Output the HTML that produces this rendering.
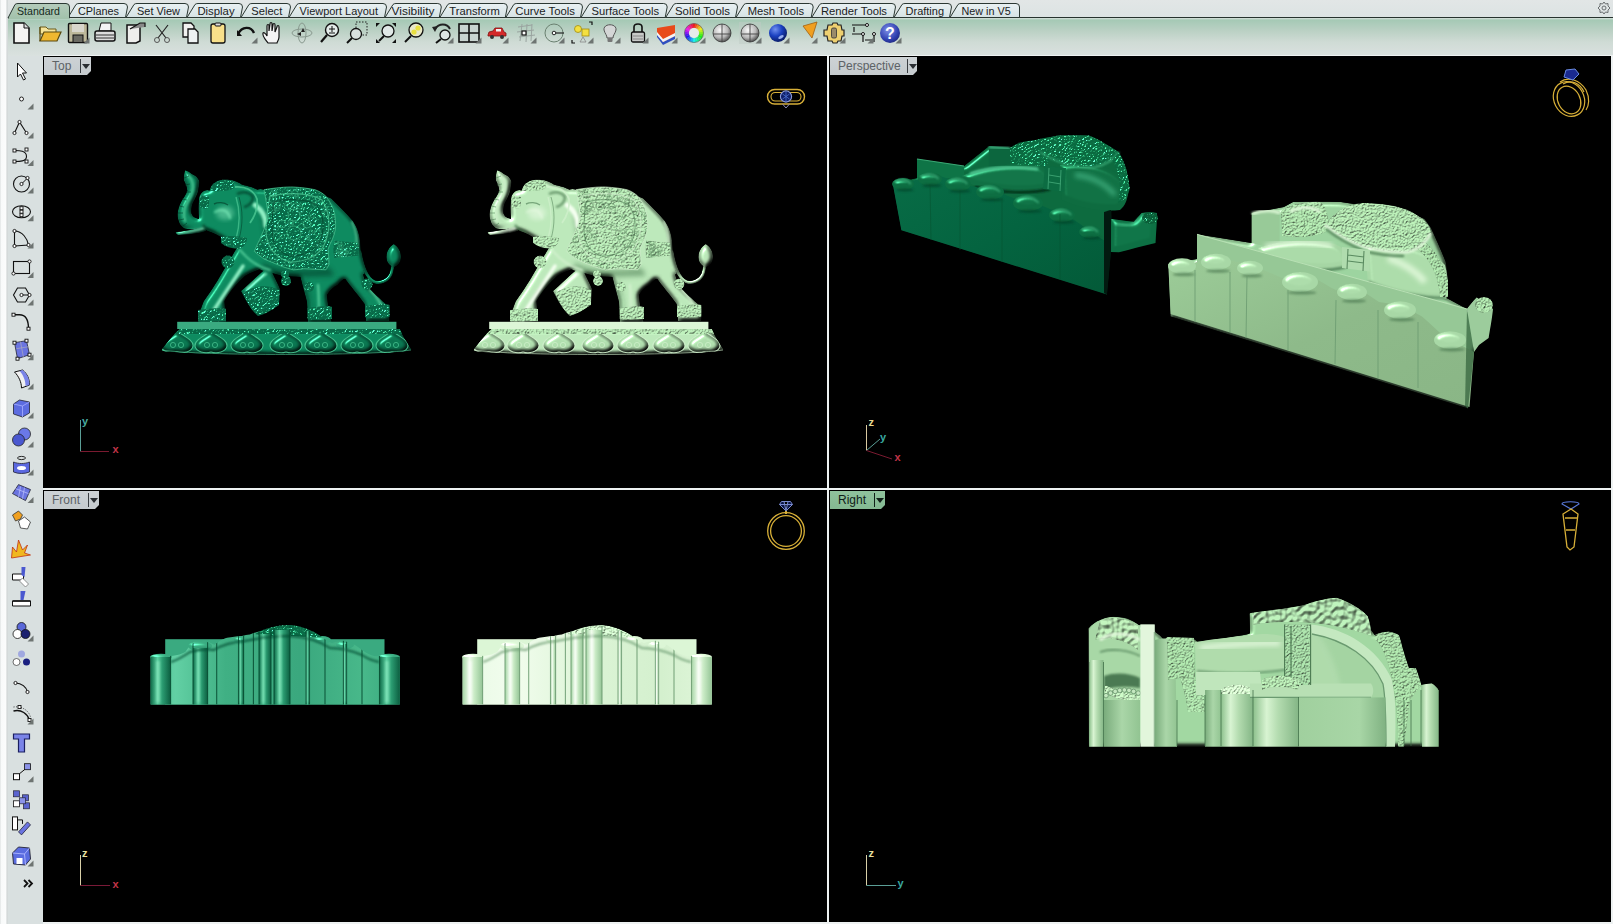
<!DOCTYPE html>
<html><head><meta charset="utf-8">
<style>
html,body{margin:0;padding:0;width:1613px;height:924px;overflow:hidden;background:#dfe4e4;font-family:"Liberation Sans",sans-serif;}
.abs{position:absolute;}
#tabrow{left:0;top:0;width:1613px;height:18px;background:linear-gradient(#e2e6e6,#dce3e3);}
#tbar{left:8px;top:18px;width:1605px;height:38px;background:linear-gradient(#d9e2de 0px,#a5c9b5 2px,#b9d0c3 12px,#cfdbd5 24px,#dae1df 38px);}
#lstrip{left:0;top:0;width:8px;height:924px;background:linear-gradient(90deg,#d8dcdc 0,#f8fafa 1px,#fbfcfc 6px,#c9cfcf 7px,#dfe4e4 8px);}
#ltb{left:8px;top:56px;width:35px;height:868px;background:#d9e0e0;}
.vp{position:absolute;background:#000;overflow:hidden;}
.lbl{position:absolute;height:18px;background:linear-gradient(#cdd2d5,#c5cbce);color:#5d6266;font-size:12px;line-height:18px;clip-path:polygon(0 0,100% 0,100% calc(100% - 4px),calc(100% - 4px) 100%,0 100%);}
.lbl span{position:absolute;left:8px;top:0;}
.lbl i{position:absolute;top:2px;width:1px;height:14px;background:#3a3e42;}
.lbl b{position:absolute;top:7px;width:0;height:0;border-left:4px solid transparent;border-right:4px solid transparent;border-top:5px solid #2a2e32;}
</style></head>
<body>
<div id="tabrow" class="abs"></div>
<div id="tbar" class="abs"></div>
<div id="lstrip" class="abs"></div>
<div id="ltb" class="abs"></div>
<svg class="abs" style="left:0;top:0" width="1613" height="20">
<defs><linearGradient id="tgi" x1="0" y1="0" x2="0" y2="1"><stop offset="0" stop-color="#e9f1f3"/><stop offset="1" stop-color="#d6e2e4"/></linearGradient><linearGradient id="tga" x1="0" y1="0" x2="0" y2="1"><stop offset="0" stop-color="#b4cbbb"/><stop offset="1" stop-color="#a3c2ac"/></linearGradient></defs>
<rect x="8" y="17" width="1605" height="1" fill="#27332e"/>
<path d="M68,17.5 L76,4.5 Q77,3.5 79,3.5 L124,3.5 Q127.5,3.5 127.5,7 L125.5,17.5 Z" fill="url(#tgi)" stroke="#2b3833" stroke-width="1"/>
<text x="78" y="14.5" font-family="Liberation Sans" font-size="11.5" fill="#1a221e" textLength="41" lengthAdjust="spacingAndGlyphs">CPlanes</text>
<path d="M126,17.5 L134,4.5 Q135,3.5 137,3.5 L185,3.5 Q188.5,3.5 188.5,7 L186.5,17.5 Z" fill="url(#tgi)" stroke="#2b3833" stroke-width="1"/>
<text x="137" y="14.5" font-family="Liberation Sans" font-size="11.5" fill="#1a221e" textLength="43" lengthAdjust="spacingAndGlyphs">Set View</text>
<path d="M187,17.5 L195,4.5 Q196,3.5 198,3.5 L239,3.5 Q242.5,3.5 242.5,7 L240.5,17.5 Z" fill="url(#tgi)" stroke="#2b3833" stroke-width="1"/>
<text x="197.4" y="14.5" font-family="Liberation Sans" font-size="11.5" fill="#1a221e" textLength="37.2" lengthAdjust="spacingAndGlyphs">Display</text>
<path d="M241,17.5 L249,4.5 Q250,3.5 252,3.5 L287,3.5 Q290.5,3.5 290.5,7 L288.5,17.5 Z" fill="url(#tgi)" stroke="#2b3833" stroke-width="1"/>
<text x="251.3" y="14.5" font-family="Liberation Sans" font-size="11.5" fill="#1a221e" textLength="31" lengthAdjust="spacingAndGlyphs">Select</text>
<path d="M289,17.5 L297,4.5 Q298,3.5 300,3.5 L383,3.5 Q386.5,3.5 386.5,7 L384.5,17.5 Z" fill="url(#tgi)" stroke="#2b3833" stroke-width="1"/>
<text x="299.6" y="14.5" font-family="Liberation Sans" font-size="11.5" fill="#1a221e" textLength="78.4" lengthAdjust="spacingAndGlyphs">Viewport Layout</text>
<path d="M385,17.5 L393,4.5 Q394,3.5 396,3.5 L437.8,3.5 Q441.3,3.5 441.3,7 L439.3,17.5 Z" fill="url(#tgi)" stroke="#2b3833" stroke-width="1"/>
<text x="391.6" y="14.5" font-family="Liberation Sans" font-size="11.5" fill="#1a221e" textLength="42.8" lengthAdjust="spacingAndGlyphs">Visibility</text>
<path d="M439.8,17.5 L447.8,4.5 Q448.8,3.5 450.8,3.5 L503.8,3.5 Q507.3,3.5 507.3,7 L505.3,17.5 Z" fill="url(#tgi)" stroke="#2b3833" stroke-width="1"/>
<text x="449.3" y="14.5" font-family="Liberation Sans" font-size="11.5" fill="#1a221e" textLength="50.6" lengthAdjust="spacingAndGlyphs">Transform</text>
<path d="M505.8,17.5 L513.8,4.5 Q514.8,3.5 516.8,3.5 L579,3.5 Q582.5,3.5 582.5,7 L580.5,17.5 Z" fill="url(#tgi)" stroke="#2b3833" stroke-width="1"/>
<text x="515.3" y="14.5" font-family="Liberation Sans" font-size="11.5" fill="#1a221e" textLength="59.7" lengthAdjust="spacingAndGlyphs">Curve Tools</text>
<path d="M581,17.5 L589,4.5 Q590,3.5 592,3.5 L663.7,3.5 Q667.2,3.5 667.2,7 L665.2,17.5 Z" fill="url(#tgi)" stroke="#2b3833" stroke-width="1"/>
<text x="591.5" y="14.5" font-family="Liberation Sans" font-size="11.5" fill="#1a221e" textLength="67.5" lengthAdjust="spacingAndGlyphs">Surface Tools</text>
<path d="M665.7,17.5 L673.7,4.5 Q674.7,3.5 676.7,3.5 L734,3.5 Q737.5,3.5 737.5,7 L735.5,17.5 Z" fill="url(#tgi)" stroke="#2b3833" stroke-width="1"/>
<text x="675" y="14.5" font-family="Liberation Sans" font-size="11.5" fill="#1a221e" textLength="55" lengthAdjust="spacingAndGlyphs">Solid Tools</text>
<path d="M736,17.5 L744,4.5 Q745,3.5 747,3.5 L809.7,3.5 Q813.2,3.5 813.2,7 L811.2,17.5 Z" fill="url(#tgi)" stroke="#2b3833" stroke-width="1"/>
<text x="747.7" y="14.5" font-family="Liberation Sans" font-size="11.5" fill="#1a221e" textLength="56.3" lengthAdjust="spacingAndGlyphs">Mesh Tools</text>
<path d="M811.7,17.5 L819.7,4.5 Q820.7,3.5 822.7,3.5 L892,3.5 Q895.5,3.5 895.5,7 L893.5,17.5 Z" fill="url(#tgi)" stroke="#2b3833" stroke-width="1"/>
<text x="821" y="14.5" font-family="Liberation Sans" font-size="11.5" fill="#1a221e" textLength="66" lengthAdjust="spacingAndGlyphs">Render Tools</text>
<path d="M894,17.5 L902,4.5 Q903,3.5 905,3.5 L948,3.5 Q951.5,3.5 951.5,7 L949.5,17.5 Z" fill="url(#tgi)" stroke="#2b3833" stroke-width="1"/>
<text x="905.6" y="14.5" font-family="Liberation Sans" font-size="11.5" fill="#1a221e" textLength="38.4" lengthAdjust="spacingAndGlyphs">Drafting</text>
<path d="M950,17.5 L958,4.5 Q959,3.5 961,3.5 L1016,3.5 Q1019.5,3.5 1019.5,7 L1019.5,17.5 Z" fill="url(#tgi)" stroke="#2b3833" stroke-width="1"/>
<text x="961.5" y="14.5" font-family="Liberation Sans" font-size="11.5" fill="#1a221e" textLength="49.2" lengthAdjust="spacingAndGlyphs">New in V5</text>
<path d="M8,18 L15,4.5 Q16,3.5 18,3.5 L66,3.5 Q69.5,3.5 69.5,7 L69.5,18 Z" fill="url(#tga)" stroke="#2b3833" stroke-width="1"/>
<rect x="9" y="17" width="60" height="2" fill="#a3c2ac"/>
<text x="17" y="14.5" font-family="Liberation Sans" font-size="11.5" fill="#142a1c" textLength="43" lengthAdjust="spacingAndGlyphs">Standard</text>
<g transform="translate(1604,8)" fill="none" stroke="#6a6e70" stroke-width="1"><circle r="2"/><path d="M0,-6 L1.5,-4 L4,-4.5 L4,-2 L6,0 L4,2 L4,4.5 L1.5,4 L0,6 L-1.5,4 L-4,4.5 L-4,2 L-6,0 L-4,-2 L-4,-4.5 L-1.5,-4 Z"/></g>
</svg>
<svg class="abs" style="left:0;top:0" width="1000" height="56">
<defs><radialGradient id="sph" cx="0.4" cy="0.35" r="0.7"><stop offset="0" stop-color="#fafafa"/><stop offset="0.6" stop-color="#b8b8b8"/><stop offset="1" stop-color="#404040"/></radialGradient><radialGradient id="bsph" cx="0.35" cy="0.3" r="0.75"><stop offset="0" stop-color="#7090f0"/><stop offset="0.5" stop-color="#1a40c0"/><stop offset="1" stop-color="#0a1a60"/></radialGradient><radialGradient id="hsph" cx="0.4" cy="0.35" r="0.7"><stop offset="0" stop-color="#8090e8"/><stop offset="0.7" stop-color="#3040b0"/><stop offset="1" stop-color="#202880"/></radialGradient><linearGradient id="cw"><stop offset="0" stop-color="#e04040"/><stop offset="1" stop-color="#4040e0"/></linearGradient></defs>
<g transform="translate(21,33)"><path d="M-7,-10 L3,-10 L8,-5 L8,10 L-7,10 Z" fill="#f4f4f2" stroke="#111" stroke-width="1.6"/><path d="M3,-10 L3,-5 L8,-5" fill="#ddd" stroke="#111" stroke-width="1"/></g>
<g transform="translate(50,33)"><path d="M-10,-6 L-4,-6 L-2,-4 L6,-4 L6,1 L-10,1Z" fill="#f6e49a" stroke="#6b5a1a" stroke-width="1"/><path d="M-10,8 L-6,-1 L11,-1 L7,8 Z" fill="#f0b830" stroke="#5a4a10" stroke-width="1.2"/><path d="M-10,-6 L-10,8" stroke="#5a4a10" stroke-width="1.2"/></g>
<g transform="translate(78,33)"><rect x="-9.5" y="-9.5" width="19" height="19" rx="1" fill="#bdb89a" stroke="#111" stroke-width="1.4"/><rect x="-6" y="-9" width="12" height="8" fill="#d8d6cc"/><rect x="-5" y="2" width="10" height="7.5" fill="#6a6a62" stroke="#111" stroke-width="1"/></g>
<path d="M89.5,37.5 L89.5,43.5 L83.5,43.5 Z" fill="#6e7472"/>
<g transform="translate(105,33)"><path d="M-4,-10 L6,-10 L6,-2 L-6,-2 Z" fill="#f4f4f4" stroke="#111" stroke-width="1"/><rect x="-10" y="-2" width="20" height="10" rx="2" fill="#dcdcdc" stroke="#111" stroke-width="1.5"/><path d="M-9,2 L9,2 M-9,5 L9,5" stroke="#333" stroke-width="1.2"/></g>
<g transform="translate(136,33)"><path d="M-9,-8 L4,-8 L4,8 L0,10 L-9,10 Z" fill="#eeeeec" stroke="#111" stroke-width="1.5"/><path d="M-6,-4 L4,-10 L9,-10 L9,-6" fill="#888" stroke="#111" stroke-width="1.2"/></g>
<g transform="translate(162,33)"><path d="M-6,-8 L4,5 M6,-8 L-4,5" stroke="#222" stroke-width="1.2"/><circle cx="-5" cy="7" r="2.5" fill="none" stroke="#555" stroke-width="1"/><circle cx="5" cy="7" r="2.5" fill="none" stroke="#555" stroke-width="1"/></g>
<g transform="translate(190,33)"><path d="M-7,-10 L1,-10 L4,-7 L4,4 L-7,4 Z" fill="#f2f2f0" stroke="#111" stroke-width="1.3"/><path d="M-2,-4 L5,-4 L8,-1 L8,10 L-2,10 Z" fill="#eef2f2" stroke="#111" stroke-width="1.3"/></g>
<g transform="translate(218,33)"><rect x="-7" y="-9" width="14" height="19" rx="2" fill="#f8e08a" stroke="#111" stroke-width="1.3"/><rect x="-3" y="-10" width="6" height="3" rx="1" fill="#ddd" stroke="#111" stroke-width="1"/></g>
<g transform="translate(246,32)"><path d="M-8,2 C-4,-6 5,-6 8,1" fill="none" stroke="#111" stroke-width="2.4"/><path d="M-10,-1 L-5,5 L-10,5 Z" fill="#111" transform="translate(1,-1)"/></g>
<path d="M257.5,37.5 L257.5,43.5 L251.5,43.5 Z" fill="#6e7472"/>
<g transform="translate(272,33)"><path d="M-4,10 C-7,6 -10,3 -9,0 C-8,-1 -6,1 -5,3 L-5,-7 C-5,-9 -3,-9 -3,-7 L-3,-2 L-2,-9 C-2,-11 0,-11 0,-9 L0,-2 L1,-8 C1,-10 3,-10 3,-8 L3,-1 L5,-6 C5,-8 7,-8 7,-6 L7,4 C7,7 5,9 5,10 Z" fill="#f4f4f4" stroke="#111" stroke-width="1.2"/></g>
<g transform="translate(302,33)"><ellipse rx="10" ry="4" fill="none" stroke="#8a9a90" stroke-width="1"/><ellipse rx="4" ry="10" fill="none" stroke="#8a9a90" stroke-width="1"/><path d="M1,-5 L3,-1 L-1,-1Z M-5,1 L-1,-1 L-1,3Z" fill="#222"/></g>
<g transform="translate(330,33)"><circle cx="2" cy="-3" r="6.5" fill="#e4ecea" stroke="#111" stroke-width="1.4"/><path d="M-3,2 L-9,9" stroke="#111" stroke-width="2.2"/><path d="M-1,-4 L5,-4 M2,-7 L2,-1 M-1,0 L5,0" stroke="#111" stroke-width="1"/></g>
<g transform="translate(357,33)"><rect x="-1" y="-11" width="11" height="13" fill="none" stroke="#222" stroke-width="1" stroke-dasharray="1.5,1.5"/><circle cx="-1" cy="1" r="5.5" fill="#d8e0de" stroke="#111" stroke-width="1.3"/><path d="M-5,5 L-10,10" stroke="#111" stroke-width="2"/></g>
<g transform="translate(386,33)"><path d="M-10,-10 L-6,-10 L-10,-6Z M10,-10 L6,-10 L10,-6Z M-10,10 L-6,10 L-10,6Z M10,10 L6,10 L10,6Z" fill="#111"/><circle cx="2" cy="-2" r="6" fill="#e0e8e6" stroke="#111" stroke-width="1.3"/><path d="M-2,3 L-7,8" stroke="#111" stroke-width="2"/></g>
<g transform="translate(414,33)"><circle cx="2" cy="-3" r="7" fill="#e8e8c8" stroke="#111" stroke-width="1.3"/><circle cx="4" cy="-5" r="2.6" fill="#e8e040"/><circle cx="0" cy="-1" r="2.6" fill="#e8e040"/><path d="M-3,3 L-9,9" stroke="#111" stroke-width="2"/></g>
<g transform="translate(442,33)"><path d="M-7,-4 C-3,-10 5,-10 8,-4" fill="none" stroke="#222" stroke-width="2"/><path d="M-10,-6 L-4,-7 L-7,-1Z" fill="#222"/><circle cx="3" cy="2" r="5" fill="#dde4e2" stroke="#111" stroke-width="1.3"/><path d="M-1,6 L-6,10" stroke="#111" stroke-width="2"/></g>
<path d="M453.5,37.5 L453.5,43.5 L447.5,43.5 Z" fill="#6e7472"/>
<g transform="translate(469,33)"><rect x="-10" y="-9" width="20" height="18" fill="#c8d4d0" stroke="#111" stroke-width="1.6"/><path d="M0,-9 L0,9 M-10,0 L10,0" stroke="#111" stroke-width="1.6"/></g>
<path d="M481.5,37.5 L481.5,43.5 L475.5,43.5 Z" fill="#6e7472"/>
<g transform="translate(497,33)"><path d="M-9,2 L-8,-1 L-4,-2 L-2,-5 L5,-5 L7,-1 L9,0 L9,3 L-9,3Z" fill="#d42a2a" stroke="#801010" stroke-width="0.8"/><rect x="-1" y="-4" width="5" height="2.5" fill="#f0f0f0"/><circle cx="-5" cy="4" r="2" fill="#333"/><circle cx="5" cy="4" r="2" fill="#333"/></g>
<path d="M508.5,37.5 L508.5,43.5 L502.5,43.5 Z" fill="#6e7472"/>
<g transform="translate(526,33)"><path d="M-8,-6 L6,-8 M-9,-1 L8,-3 M-7,4 L9,2 M-4,-9 L-6,8 M1,-9 L0,9 M6,-9 L5,8" stroke="#9aa4a0" stroke-width="1"/><rect x="-4" y="-2" width="4" height="4" fill="#fff" stroke="#111" stroke-width="1.2"/></g>
<path d="M536.5,37.5 L536.5,43.5 L530.5,43.5 Z" fill="#6e7472"/>
<g transform="translate(554,33)"><circle r="9" fill="none" stroke="#6a8070" stroke-width="1"/><circle r="1.8" fill="#fff" stroke="#222" stroke-width="1"/><path d="M2,0 L10,0" stroke="#222" stroke-width="1.2"/></g>
<path d="M564.5,37.5 L564.5,43.5 L558.5,43.5 Z" fill="#6e7472"/>
<g transform="translate(582,33)"><circle cx="-4" cy="-4" r="3.5" fill="#f4e040" stroke="#a08a10" stroke-width="0.8"/><rect x="0" y="-4" width="7" height="7" fill="#f4e040" stroke="#a08a10" stroke-width="0.8"/><path d="M-2,9 L1,4 L4,9Z" fill="none" stroke="#888" stroke-width="0.8"/><path d="M7,-11 L10,-11 L10,-8 M-10,7 L-10,10 L-7,10" stroke="#111" stroke-width="1.2" fill="none"/></g>
<path d="M593.5,37.5 L593.5,43.5 L587.5,43.5 Z" fill="#6e7472"/>
<g transform="translate(610,32)"><path d="M-6,-2 C-7,-9 7,-9 6,-2 C5,2 3,3 3,6 L-3,6 C-3,3 -5,2 -6,-2Z" fill="#d4d6d6" stroke="#555" stroke-width="1"/><rect x="-2.5" y="6" width="5" height="4" rx="1" fill="#777"/></g>
<path d="M620.5,37.5 L620.5,43.5 L614.5,43.5 Z" fill="#6e7472"/>
<g transform="translate(638,33)"><path d="M-4,-1 L-4,-6 C-4,-10 4,-10 4,-6 L4,-1" fill="none" stroke="#111" stroke-width="1.6"/><rect x="-6.5" y="-1" width="13" height="10" rx="1.5" fill="#c8cac8" stroke="#111" stroke-width="1.3"/><path d="M-5,3 L5,3 M-5,6 L5,6" stroke="#888" stroke-width="1"/></g>
<path d="M648.5,37.5 L648.5,43.5 L642.5,43.5 Z" fill="#6e7472"/>
<g transform="translate(666,33)"><path d="M-9,-5 L9,-8 L9,3 L-3,9 L-9,0Z" fill="#e84a1a"/><path d="M-9,0 L-3,9 L9,3 L9,6 L-3,12 L-9,4Z" fill="#3050c0"/><path d="M-9,-1 L-3,6 L9,0 L9,3 L-3,9 L-9,2Z" fill="#f4f4f4"/></g>
<path d="M677.5,37.5 L677.5,43.5 L671.5,43.5 Z" fill="#6e7472"/>
<g transform="translate(694,33)"><path d="M-1.32,-9.41 L1.32,-9.41 L0.70,-4.95 L-0.70,-4.95Z" fill="hsl(0,85%,52%)"/><path d="M1.16,-9.43 L3.71,-8.74 L1.95,-4.60 L0.61,-4.96Z" fill="hsl(15,85%,52%)"/><path d="M3.56,-8.81 L5.85,-7.49 L3.08,-3.94 L1.87,-4.64Z" fill="hsl(30,85%,52%)"/><path d="M5.72,-7.59 L7.59,-5.72 L3.99,-3.01 L3.01,-3.99Z" fill="hsl(45,85%,52%)"/><path d="M7.49,-5.85 L8.81,-3.56 L4.64,-1.87 L3.94,-3.08Z" fill="hsl(60,85%,52%)"/><path d="M8.74,-3.71 L9.43,-1.16 L4.96,-0.61 L4.60,-1.95Z" fill="hsl(75,85%,52%)"/><path d="M9.41,-1.32 L9.41,1.32 L4.95,0.70 L4.95,-0.70Z" fill="hsl(90,85%,52%)"/><path d="M9.43,1.16 L8.74,3.71 L4.60,1.95 L4.96,0.61Z" fill="hsl(105,85%,52%)"/><path d="M8.81,3.56 L7.49,5.85 L3.94,3.08 L4.64,1.87Z" fill="hsl(120,85%,52%)"/><path d="M7.59,5.72 L5.72,7.59 L3.01,3.99 L3.99,3.01Z" fill="hsl(135,85%,52%)"/><path d="M5.85,7.49 L3.56,8.81 L1.87,4.64 L3.08,3.94Z" fill="hsl(150,85%,52%)"/><path d="M3.71,8.74 L1.16,9.43 L0.61,4.96 L1.95,4.60Z" fill="hsl(165,85%,52%)"/><path d="M1.32,9.41 L-1.32,9.41 L-0.70,4.95 L0.70,4.95Z" fill="hsl(180,85%,52%)"/><path d="M-1.16,9.43 L-3.71,8.74 L-1.95,4.60 L-0.61,4.96Z" fill="hsl(195,85%,52%)"/><path d="M-3.56,8.81 L-5.85,7.49 L-3.08,3.94 L-1.87,4.64Z" fill="hsl(210,85%,52%)"/><path d="M-5.72,7.59 L-7.59,5.72 L-3.99,3.01 L-3.01,3.99Z" fill="hsl(225,85%,52%)"/><path d="M-7.49,5.85 L-8.81,3.56 L-4.64,1.87 L-3.94,3.08Z" fill="hsl(240,85%,52%)"/><path d="M-8.74,3.71 L-9.43,1.16 L-4.96,0.61 L-4.60,1.95Z" fill="hsl(255,85%,52%)"/><path d="M-9.41,1.32 L-9.41,-1.32 L-4.95,-0.70 L-4.95,0.70Z" fill="hsl(270,85%,52%)"/><path d="M-9.43,-1.16 L-8.74,-3.71 L-4.60,-1.95 L-4.96,-0.61Z" fill="hsl(285,85%,52%)"/><path d="M-8.81,-3.56 L-7.49,-5.85 L-3.94,-3.08 L-4.64,-1.87Z" fill="hsl(300,85%,52%)"/><path d="M-7.59,-5.72 L-5.72,-7.59 L-3.01,-3.99 L-3.99,-3.01Z" fill="hsl(315,85%,52%)"/><path d="M-5.85,-7.49 L-3.56,-8.81 L-1.87,-4.64 L-3.08,-3.94Z" fill="hsl(330,85%,52%)"/><path d="M-3.71,-8.74 L-1.16,-9.43 L-0.61,-4.96 L-1.95,-4.60Z" fill="hsl(345,85%,52%)"/><circle r="5" fill="#e8ecea"/><circle r="9.5" fill="none" stroke="#555" stroke-width="0.6"/></g>
<path d="M705.5,37.5 L705.5,43.5 L699.5,43.5 Z" fill="#6e7472"/>
<g transform="translate(722,33)"><circle r="9" fill="url(#sph)" stroke="#333" stroke-width="0.8"/><path d="M-9,1 L9,1 M0,-9 L0,9" stroke="#444" stroke-width="0.9"/></g>
<g transform="translate(750,33)"><rect x="-11" y="-11" width="22" height="22" fill="#c0ccc6" opacity="0.5"/><circle r="9" fill="url(#sph)" stroke="#333" stroke-width="0.8"/><path d="M-9,1 L9,1 M0,-9 L0,9" stroke="#444" stroke-width="0.9"/></g>
<path d="M761.5,37.5 L761.5,43.5 L755.5,43.5 Z" fill="#6e7472"/>
<g transform="translate(778,33)"><circle r="9" fill="url(#bsph)"/><ellipse cx="3" cy="4" rx="3" ry="1.5" fill="#9ab0f0" transform="rotate(-30 3 4)"/></g>
<path d="M789.5,37.5 L789.5,43.5 L783.5,43.5 Z" fill="#6e7472"/>
<g transform="translate(810,31)"><path d="M-7,-5 L7,-9 L2,7Z" fill="#f0a020" stroke="#a06010" stroke-width="0.8"/></g>
<path d="M817.5,37.5 L817.5,43.5 L811.5,43.5 Z" fill="#6e7472"/>
<g transform="translate(834,33)"><path d="M-10,-3 L-7,-3 L-6,-8 L-2,-8 L-1,-10 L3,-10 L4,-8 L7,-8 L8,-3 L10,-3 L10,3 L8,3 L7,8 L4,8 L3,10 L-1,10 L-2,8 L-6,8 L-7,3 L-10,3Z" fill="#eed070" stroke="#222" stroke-width="1.2"/><rect x="-2.5" y="-5" width="5" height="10" rx="1.5" fill="#9a8a6a" stroke="#333" stroke-width="0.8"/></g>
<path d="M845.5,37.5 L845.5,43.5 L839.5,43.5 Z" fill="#6e7472"/>
<g transform="translate(862,33)"><path d="M-10,-8 L4,-8 M-10,1 L1,1 L1,9 M12,1 L12,9 M-8,-6 L-8,-1 M3,7 L11,7" stroke="#111" stroke-width="1.2" fill="none"/><circle cx="5" cy="-8" r="1.5" fill="#fff" stroke="#111"/><circle cx="1" cy="1" r="1.5" fill="#fff" stroke="#111"/><circle cx="12" cy="1" r="1.5" fill="#fff" stroke="#111"/></g>
<path d="M873.5,37.5 L873.5,43.5 L867.5,43.5 Z" fill="#6e7472"/>
<g transform="translate(890,33)"><circle r="10" fill="url(#hsph)"/><text x="0" y="6" text-anchor="middle" font-family="Liberation Sans" font-weight="bold" font-size="16" fill="#fff">?</text></g>
<path d="M901.5,37.5 L901.5,43.5 L895.5,43.5 Z" fill="#6e7472"/>
</svg>
<svg class="abs" style="left:0;top:56px" width="43" height="868">
<g transform="translate(21.5,15)"><path d="M-4,-8 L-4,6 L-1,3 L2,9 L4,8 L1,2 L5,2 Z" fill="#fff" stroke="#111" stroke-width="1"/></g>
<g transform="translate(21.5,43)"><circle cx="0" cy="0" r="2" fill="#fff" stroke="#111" stroke-width="0.9"/></g>
<path d="M33.5,47.5 L33.5,53.5 L27.5,53.5 Z" fill="#6e7472"/>
<g transform="translate(21.5,72)"><path d="M-7,5 L-2,-6 L5,5" fill="none" stroke="#111" stroke-width="1.1"/><circle cx="-7" cy="5" r="1.6" fill="#fff" stroke="#111" stroke-width="0.9"/><circle cx="-2" cy="-6" r="1.6" fill="#fff" stroke="#111" stroke-width="0.9"/><circle cx="5" cy="5" r="1.6" fill="#fff" stroke="#111" stroke-width="0.9"/></g>
<path d="M33.5,76.5 L33.5,82.5 L27.5,82.5 Z" fill="#6e7472"/>
<g transform="translate(21.5,99.5)"><path d="M-7,-5 C-2,-5 5,-5 5,1 C5,6 -2,6 -7,6" fill="none" stroke="#111" stroke-width="1.1"/><rect x="-8.5" y="-6.5" width="3" height="3" fill="#fff" stroke="#111" stroke-width="0.9"/><rect x="-8.5" y="4.5" width="3" height="3" fill="#fff" stroke="#111" stroke-width="0.9"/><rect x="3.5" y="-7.5" width="3" height="3" fill="#fff" stroke="#111" stroke-width="0.9"/><rect x="3.5" y="4.5" width="3" height="3" fill="#fff" stroke="#111" stroke-width="0.9"/></g>
<path d="M33.5,104.0 L33.5,110.0 L27.5,110.0 Z" fill="#6e7472"/>
<g transform="translate(21.5,127)"><circle cx="0" cy="1" r="8" fill="none" stroke="#111" stroke-width="1.1"/><path d="M0,1 L6,-5" stroke="#111" stroke-width="1"/><circle cx="0" cy="1" r="1.6" fill="#fff" stroke="#111" stroke-width="0.9"/><circle cx="6" cy="-5" r="1.6" fill="#fff" stroke="#111" stroke-width="0.9"/></g>
<path d="M33.5,131.5 L33.5,137.5 L27.5,137.5 Z" fill="#6e7472"/>
<g transform="translate(21.5,154.7)"><ellipse cx="0" cy="1" rx="9" ry="6" fill="none" stroke="#111" stroke-width="1.1"/><rect x="-1.5" y="-4.0" width="3" height="3" fill="#fff" stroke="#111" stroke-width="0.9"/><rect x="-1.5" y="-0.5" width="3" height="3" fill="#fff" stroke="#111" stroke-width="0.9"/><rect x="-1.5" y="3.0" width="3" height="3" fill="#fff" stroke="#111" stroke-width="0.9"/></g>
<path d="M33.5,159.2 L33.5,165.2 L27.5,165.2 Z" fill="#6e7472"/>
<g transform="translate(21.5,182)"><path d="M-7,8 L-7,-7 C1,-7 6,1 7,7 L-7,8" fill="none" stroke="#111" stroke-width="1.1"/><circle cx="-7" cy="8" r="1.6" fill="#fff" stroke="#111" stroke-width="0.9"/><circle cx="-7" cy="-7" r="1.6" fill="#fff" stroke="#111" stroke-width="0.9"/><circle cx="7" cy="7" r="1.6" fill="#fff" stroke="#111" stroke-width="0.9"/></g>
<path d="M33.5,186.5 L33.5,192.5 L27.5,192.5 Z" fill="#6e7472"/>
<g transform="translate(21.5,211.5)"><rect x="-8" y="-6" width="16" height="12" fill="none" stroke="#111" stroke-width="1.1"/><circle cx="-8" cy="6" r="1.6" fill="#fff" stroke="#111" stroke-width="0.9"/><circle cx="8" cy="-6" r="1.6" fill="#fff" stroke="#111" stroke-width="0.9"/></g>
<path d="M33.5,216.0 L33.5,222.0 L27.5,222.0 Z" fill="#6e7472"/>
<g transform="translate(21.5,239)"><path d="M-4,-7 L4,-7 L8,0 L4,7 L-4,7 L-8,0Z" fill="none" stroke="#111" stroke-width="1.1"/><path d="M0,0 L8,0" stroke="#111"/><circle cx="0" cy="0" r="1.6" fill="#fff" stroke="#111" stroke-width="0.9"/><circle cx="8" cy="0" r="1.6" fill="#fff" stroke="#111" stroke-width="0.9"/></g>
<path d="M33.5,243.5 L33.5,249.5 L27.5,249.5 Z" fill="#6e7472"/>
<g transform="translate(21.5,266.7)"><path d="M-8,-8 L-2,-8 C4,-8 7,-4 7,6" fill="none" stroke="#111" stroke-width="1.4"/><rect x="-9.5" y="-9.5" width="3" height="3" fill="#fff" stroke="#111" stroke-width="0.9"/><rect x="5.5" y="4.5" width="3" height="3" fill="#fff" stroke="#111" stroke-width="0.9"/></g>
<g transform="translate(21.5,293.7)"><path d="M-7,-7 L5,-9 L8,5 L-4,9Z" fill="#6a74e0" stroke="#223" stroke-width="0.8"/><path d="M-5,-1 L7,-3 M-1,-8 L2,8" stroke="#aab" stroke-width="0.7"/><rect x="-8.5" y="-8.5" width="3" height="3" fill="#fff" stroke="#111" stroke-width="0.9"/><rect x="3.5" y="-10.5" width="3" height="3" fill="#fff" stroke="#111" stroke-width="0.9"/><rect x="6.5" y="3.5" width="3" height="3" fill="#fff" stroke="#111" stroke-width="0.9"/><rect x="-5.5" y="7.5" width="3" height="3" fill="#fff" stroke="#111" stroke-width="0.9"/></g>
<path d="M33.5,298.2 L33.5,304.2 L27.5,304.2 Z" fill="#6e7472"/>
<g transform="translate(21.5,323)"><path d="M-7,-7 L1,-9 C6,-5 8,0 8,6 L0,9 C0,3 -3,-3 -7,-7Z" fill="#f0f0f0" stroke="#111" stroke-width="1"/><path d="M1,-9 C6,-5 8,0 8,6 L4,7 C4,2 2,-4 -2,-8Z" fill="#7a84e8"/></g>
<path d="M33.5,327.5 L33.5,333.5 L27.5,333.5 Z" fill="#6e7472"/>
<g transform="translate(21.5,352)"><path d="M-8,-4 L-2,-8 L8,-6 L8,5 L1,9 L-8,6Z" fill="#5c6ce0" stroke="#223" stroke-width="0.8"/><path d="M-8,-4 L1,-2 L8,-6 M1,-2 L1,9" stroke="#a8b0ff" stroke-width="0.8" fill="none"/></g>
<path d="M33.5,356.5 L33.5,362.5 L27.5,362.5 Z" fill="#6e7472"/>
<g transform="translate(21.5,381)"><circle cx="3" cy="-3" r="6" fill="#6a78e8" stroke="#222" stroke-width="0.8"/><circle cx="-3" cy="3" r="6" fill="#4a58d0" stroke="#222" stroke-width="0.8"/></g>
<path d="M33.5,385.5 L33.5,391.5 L27.5,391.5 Z" fill="#6e7472"/>
<g transform="translate(21.5,409)"><ellipse cx="0" cy="-7" rx="4" ry="1.6" fill="none" stroke="#111" stroke-width="0.9"/><path d="M-8,-3 C-3,-1 3,-1 8,-3 L8,7 C3,9 -3,9 -8,7Z" fill="#5a68e0" stroke="#223" stroke-width="0.8"/><ellipse cx="0" cy="3" rx="4.5" ry="2" fill="#fff"/></g>
<path d="M33.5,413.5 L33.5,419.5 L27.5,419.5 Z" fill="#6e7472"/>
<g transform="translate(21.5,436.6)"><path d="M-9,1 L-3,-8 L9,-3 L4,8Z" fill="#6a74e0" stroke="#223" stroke-width="0.8"/><path d="M-6,-4 L7,1 M-1,-6 L-3,5 M3,-5 L1,6" stroke="#c0c4ff" stroke-width="0.7"/></g>
<path d="M33.5,441.1 L33.5,447.1 L27.5,447.1 Z" fill="#6e7472"/>
<g transform="translate(21.5,464)"><path d="M-9,-5 L-3,-9 L1,-5 L-1,-1 L-6,1Z" fill="#f0a020" stroke="#333" stroke-width="0.8"/><path d="M-3,1 L3,-3 L9,2 L6,9 L-1,8Z" fill="#fff" stroke="#333" stroke-width="0.8"/></g>
<g transform="translate(21.5,493)"><path d="M-10,9 L-9,-2 L-5,3 L-3,-9 L1,1 L6,-4 L3,4 L9,6 L-10,9Z" fill="#f0b820" stroke="#c03010" stroke-width="0.8"/></g>
<g transform="translate(21.5,521)"><path d="M-9,-3 L2,-3 L2,3 L-9,3Z" fill="#fff" stroke="#111" stroke-width="1"/><path d="M0,-10 L4,-10 L3,0 L0,-2Z" fill="#4a58d0"/><path d="M1,1 L7,7 L4,10 L-2,4Z" fill="#fff" stroke="#777" stroke-width="0.8"/></g>
<g transform="translate(21.5,545)"><path d="M-9,0 L9,0 L9,5 L-9,5Z" fill="#fff" stroke="#111" stroke-width="1"/><path d="M-1,-10 L4,-10 L2,-1 L-1,-1Z" fill="#4a58d0"/><path d="M-9,0 L9,0" stroke="#111" stroke-width="1.5"/></g>
<g transform="translate(21.5,575)"><circle cx="0" cy="-4" r="4.5" fill="#5a68d8" stroke="#111" stroke-width="0.8"/><circle cx="-4" cy="3" r="4.5" fill="#fff" stroke="#111" stroke-width="0.8"/><circle cx="4" cy="3" r="4.5" fill="#1a2070" stroke="#111" stroke-width="0.8"/></g>
<path d="M33.5,579.5 L33.5,585.5 L27.5,585.5 Z" fill="#6e7472"/>
<g transform="translate(21.5,603)"><circle cx="0" cy="-5" r="3.5" fill="#a0a8e0"/><circle cx="-5" cy="3" r="3.5" fill="#fff" stroke="#333" stroke-width="0.7"/><circle cx="5" cy="3" r="3.5" fill="#1a2080"/></g>
<g transform="translate(21.5,631)"><path d="M-6,-4 C0,-4 5,0 6,5" fill="none" stroke="#111" stroke-width="1.2"/><circle cx="-6" cy="-4" r="1.6" fill="#fff" stroke="#111" stroke-width="0.9"/><circle cx="6" cy="5" r="1.6" fill="#fff" stroke="#111" stroke-width="0.9"/></g>
<g transform="translate(21.5,658)"><path d="M-8,-3 C0,-5 6,0 8,6" fill="none" stroke="#111" stroke-width="1.4"/><path d="M-8,-7 C0,-8 7,-4 9,3" fill="none" stroke="#111" stroke-width="0.8" stroke-dasharray="1,1.5"/><rect x="-3.5" y="-8.5" width="3" height="3" fill="#fff" stroke="#111" stroke-width="0.9"/><rect x="6.5" y="4.5" width="3" height="3" fill="#fff" stroke="#111" stroke-width="0.9"/></g>
<path d="M33.5,662.5 L33.5,668.5 L27.5,668.5 Z" fill="#6e7472"/>
<g transform="translate(21.5,687)"><path d="M-8,-9 L8,-9 L8,-4 L3,-4 L3,9 L-3,9 L-3,-4 L-8,-4Z" fill="#7a84e8" stroke="#1a1e60" stroke-width="1.2"/></g>
<g transform="translate(21.5,715.7)"><rect x="-8" y="2" width="6" height="6" fill="#fff" stroke="#111" stroke-width="1"/><rect x="3" y="-8" width="6" height="6" fill="#8a92e8" stroke="#111" stroke-width="0.8"/><path d="M-2,2 L3,-2" stroke="#111" stroke-width="1"/></g>
<path d="M33.5,720.2 L33.5,726.2 L27.5,726.2 Z" fill="#6e7472"/>
<g transform="translate(21.5,742.8)"><rect x="-8" y="-8" width="6" height="6" fill="#5a64d0" stroke="#223" stroke-width="0.7"/><rect x="1" y="-4" width="6" height="6" fill="#5a64d0" stroke="#223" stroke-width="0.7"/><rect x="-8" y="2" width="6" height="6" fill="#fff" stroke="#111" stroke-width="0.8"/><rect x="2" y="4" width="6" height="6" fill="#5a64d0" stroke="#223" stroke-width="0.7"/><rect x="-2" y="-1" width="6" height="6" fill="#8a92e8" stroke="#223" stroke-width="0.7"/></g>
<g transform="translate(21.5,769.9)"><rect x="-9" y="-9" width="5" height="13" fill="#fff" stroke="#111" stroke-width="1"/><path d="M-4,-6 L1,-6 L1,-2" fill="none" stroke="#111"/><path d="M-3,6 L6,-4 L9,-1 L0,9Z" fill="#6a74e0" stroke="#223" stroke-width="0.8"/></g>
<g transform="translate(21.5,800)"><path d="M-9,-3 L-3,-9 L8,-8 L9,3 L4,9 L-8,8Z" fill="#5a6ce0" stroke="#223" stroke-width="0.9"/><path d="M-9,-3 L3,-2 L8,-8 M3,-2 L4,9" stroke="#b0b8ff" stroke-width="0.9" fill="none"/><rect x="-5" y="2" width="6" height="6" fill="#fff"/></g>
<path d="M33.5,804.5 L33.5,810.5 L27.5,810.5 Z" fill="#6e7472"/>
<path d="M24,824 L27.5,827.5 L24,831 M28.5,824 L32,827.5 L28.5,831" fill="none" stroke="#111" stroke-width="1.8"/>
</svg>
<div class="abs" style="left:43px;top:55px;width:1570px;height:869px;background:#eef2f2"></div>
<div class="vp" style="left:43px;top:56px;width:784px;height:432px"></div>
<div class="vp" style="left:829px;top:56px;width:782px;height:432px"></div>
<div class="vp" style="left:43px;top:490px;width:784px;height:432px"></div>
<div class="vp" style="left:829px;top:490px;width:782px;height:432px"></div>

<svg class="abs" style="left:0;top:0" width="1613" height="924">
<defs><clipPath id="c1"><rect x="43" y="56" width="784" height="432"/></clipPath><clipPath id="c2"><rect x="829" y="56" width="782" height="432"/></clipPath><clipPath id="c3"><rect x="43" y="490" width="784" height="432"/></clipPath><clipPath id="c4"><rect x="829" y="490" width="782" height="432"/></clipPath></defs>
<defs><filter id="blur1" x="-20%" y="-20%" width="140%" height="140%"><feGaussianBlur stdDeviation="1.2"/></filter><filter id="blur2" x="-20%" y="-20%" width="140%" height="140%"><feGaussianBlur stdDeviation="2.5"/></filter><linearGradient id="edb" x1="0" y1="0" x2="0" y2="1"><stop offset="0" stop-color="#1a9a6e"/><stop offset="0.5" stop-color="#138360"/><stop offset="1" stop-color="#0e7552"/></linearGradient><pattern id="edt" width="6" height="6" patternUnits="userSpaceOnUse"><rect width="6" height="6" fill="#127a58"/><circle cx="1.5" cy="1.5" r="1.2" fill="#40b88a"/><circle cx="4.5" cy="4.5" r="1" fill="#2aa078"/><circle cx="4.5" cy="1.5" r="0.6" fill="#0a5a40"/></pattern><linearGradient id="elb" x1="0" y1="0" x2="0" y2="1"><stop offset="0" stop-color="#b8e2b6"/><stop offset="0.5" stop-color="#a6d6a6"/><stop offset="1" stop-color="#98cc9a"/></linearGradient><pattern id="elt" width="6" height="6" patternUnits="userSpaceOnUse"><rect width="6" height="6" fill="#9ccc9e"/><circle cx="1.5" cy="1.5" r="1.2" fill="#d8f4d4"/><circle cx="4.5" cy="4.5" r="1" fill="#c0e6bc"/><circle cx="4.5" cy="1.5" r="0.6" fill="#6a9a70"/></pattern></defs>
<g clip-path="url(#c1)">
<defs><clipPath id="lotclip"><path d="M179.6,329 L399.7,329 C403,336 407,343 411.5,349.5 C406,351.5 401,352 396,351.5 C388,354 378,353 370,353.5 C360,354.5 350,352.5 340,354 C330,355 318,353 308,354.5 C298,355.5 285,353.5 275,354.5 C265,355.5 252,353 240,354.5 C228,355 215,353 205,354 C192,354 180,352 171,352 C166,352 163,351.5 161.5,350.3 C166,344 172,336 179.6,329 Z"/></clipPath><clipPath id="blclip"><path d="M264,189.7 C275,187.8 286,186.8 293.3,187 C302,187.5 309,188.5 315,189.7 C320,191.5 323.5,194 325.8,196.2 C330,202 333,207 334.4,212.5 C335.5,218 335.8,223 335.5,228.7 C334.8,232.5 333.8,236 332.3,239.5 C330.5,243 329,246 328,249.3 C328.5,254 329,259 329,264.4 C328,266.5 327,268.5 325.8,269.8 C318,269.5 311,269 304,268.7 C300,269.3 297,269.8 293.3,269.8 C289,268.8 286,267.8 282.5,266.6 C276,264 270,261.5 264,259 C260.5,256.5 257.5,254 254.3,251.4 C256,247 258,243 259.7,239.5 C263,232 266,225 268.4,217.9 C268,212 267,206.5 266.2,201.6 C265.5,197.5 264.8,193.5 264,189.7 Z"/><path d="M334.4,240.6 C342,241.5 350,242.2 358.2,242.8 C359,247 359,251 358.2,255.8 C350,256.5 342,257.2 334.4,258 C333,252 333,246 334.4,240.6 Z"/></clipPath><clipPath id="esil"><path d="M185.2,170.2 C188,171 190,172.5 191.6,173.7 C194,175 196,176 196.8,177.1 C198.5,179 199.4,181 199.4,182.3 C199.2,186 198.5,190 197.7,192.7 C196,197 194,201 192.5,204 C191.5,207 191.2,210 191.6,213.5 C193,216 195.5,218 198.6,218.7 L202,221 L203,228 C196,229.5 188,229.5 183.9,228.2 C181,226 179.5,224 178.7,221.3 C177.5,218 177.3,215 177.8,211.8 C178.5,208 179.5,204.5 181.3,201.4 C183.5,198 186,194.5 187.3,191 C187,187 185.5,184 183.9,180.6 C183.5,177 184,173 185.2,170.2 Z"/><path d="M205,224.5 C198,228.5 189,231 175.5,232.3 C176,233.6 177,234.8 178.5,235 C189,234.6 199,233.6 206,231 Z"/><path d="M199,219 C198,211 198,203 199.5,196 C202,191 206,189 209.7,190.6 C211,186 213,183.5 215,182.8 C218,180.5 221,179.8 223.6,179.8 C227,179.6 230.5,180 233,180.6 C236.5,181.5 239.5,183 241.8,184.5 C245,185.5 248.5,186.2 251.3,187 C254,188 256,189 257.3,189.7 L262,190 L270,230 C262,238 250,242 240,242 C232,240 224,236 219,234 C213,233 208,231.5 204,229 C201.5,226 199.8,223 199,219 Z"/><path d="M257,190 C260,188.5 262,189.2 264,189.7 C275,187.8 286,186.8 293.3,187 C302,187.5 309,188.5 315,189.7 C320,191.5 324,194 325.8,196.2 C328,197 330,197.8 331.2,198.4 C335,202 339,206 342,209.2 C346,213 350,217.5 352.8,221 C355,224.5 357,228 358.2,232 C359.5,236 360.2,240.5 360.4,245 C360.8,251 361.2,257 361.5,262 C362.5,266 363.5,270 364.7,274 L345,279 C335,277.5 315,277 302,277 L283,276 C275,274 268,272 262,270.5 C252,266 243,258 236,247 C230,242 224,239 219,236 C215,234 212,232 210,231 Z"/><path d="M238,246 C229,261 222,273 217.3,281 C211,291 206,298 203.6,301.4 C200,310 198.5,317 198.2,322 L226,322 C225.5,314 224.8,306 224.5,301 C230,291 238,282 245,276 C251,272.5 257,270 264,268 Z"/><path d="M241,291 C248,285 256,277 263,271 C268,268.5 271,269 272,272 C275,278 278,284 280,289 C280,295 279.5,300 279,305 C272,310 265,314 258,316 C252,311 246,302 241,291 Z"/><path d="M300,275 C303,288 306,297 307,302 L308,322 L331.5,322 C329,312 327.5,302 327,295 C330,290 334,286.5 337.5,285 C340,282 343,279.5 346,277 Z"/><path d="M343,276 C351,287 359,296 364.6,304 C366,311 366,316 366,321 L389,321 C390,315 390,311 389.5,307 C380,299 372,292 366.5,285 C363,276 361,266 359.5,255 Z"/><path d="M393.8,244 C399,247 401.5,253 401,258 C400.5,263 397.5,266 393.8,267 C390,266 386.8,263 386.5,258 C386,253 388.5,247 393.8,244 Z"/><path d="M179.6,329 L399.7,329 C403,336 407,343 411.5,349.5 C406,351.5 401,352 396,351.5 C388,354 378,353 370,353.5 C360,354.5 350,352.5 340,354 C330,355 318,353 308,354.5 C298,355.5 285,353.5 275,354.5 C265,355.5 252,353 240,354.5 C228,355 215,353 205,354 C192,354 180,352 171,352 C166,352 163,351.5 161.5,350.3 C166,344 172,336 179.6,329 Z"/></clipPath>
<filter id="embD" x="-5%" y="-5%" width="110%" height="110%" color-interpolation-filters="sRGB">
<feGaussianBlur in="SourceAlpha" stdDeviation="2.2" result="b"/>
<feDiffuseLighting in="b" surfaceScale="4" diffuseConstant="1.1" lighting-color="#ffffff" result="d"><feDistantLight azimuth="235" elevation="65"/></feDiffuseLighting>
<feComposite in="SourceGraphic" in2="d" operator="arithmetic" k1="1.1" k2="0" k3="0" k4="0" result="m"/>
<feSpecularLighting in="b" surfaceScale="5" specularConstant="1" specularExponent="30" lighting-color="#80f0c0" result="s"><feDistantLight azimuth="235" elevation="30"/></feSpecularLighting>
<feComposite in="s" in2="SourceAlpha" operator="in" result="s2"/>
<feComposite in="m" in2="s2" operator="arithmetic" k1="0" k2="1" k3="0.8" k4="0" result="o"/>
<feComposite in="o" in2="SourceAlpha" operator="in"/>
</filter>
<filter id="embL" x="-5%" y="-5%" width="110%" height="110%" color-interpolation-filters="sRGB">
<feGaussianBlur in="SourceAlpha" stdDeviation="2" result="b"/>
<feDiffuseLighting in="b" surfaceScale="5" diffuseConstant="1.1" lighting-color="#ffffff" result="d"><feDistantLight azimuth="235" elevation="62"/></feDiffuseLighting>
<feComposite in="SourceGraphic" in2="d" operator="arithmetic" k1="1.08" k2="0" k3="0" k4="0" result="m"/>
<feSpecularLighting in="b" surfaceScale="5" specularConstant="1" specularExponent="30" lighting-color="#f0fff0" result="s"><feDistantLight azimuth="235" elevation="30"/></feSpecularLighting>
<feComposite in="s" in2="SourceAlpha" operator="in" result="s2"/>
<feComposite in="m" in2="s2" operator="arithmetic" k1="0" k2="1" k3="0.6" k4="0" result="o"/>
<feComposite in="o" in2="SourceAlpha" operator="in"/>
</filter>
<filter id="ornD" x="0" y="0" width="100%" height="100%" color-interpolation-filters="sRGB">
<feTurbulence type="fractalNoise" baseFrequency="1.1" numOctaves="2" seed="7" result="n"/>
<feColorMatrix in="n" type="matrix" values="0 0 0 0 0  0 0 0 0 0  0 0 0 0 0  1 0 0 0 0" result="na"/>
<feSpecularLighting in="na" surfaceScale="3" specularConstant="1.1" specularExponent="35" lighting-color="#80ffc8" result="s"><feDistantLight azimuth="235" elevation="35"/></feSpecularLighting>
<feComposite in="s" in2="SourceAlpha" operator="in" result="s2"/>
<feComposite in="SourceGraphic" in2="s2" operator="arithmetic" k1="0" k2="1" k3="0.8" k4="0"/>
</filter>
<filter id="ornL" x="0" y="0" width="100%" height="100%" color-interpolation-filters="sRGB">
<feTurbulence type="fractalNoise" baseFrequency="1.1" numOctaves="2" seed="7" result="n"/>
<feColorMatrix in="n" type="matrix" values="0 0 0 0 0  0 0 0 0 0  0 0 0 0 0  1 0 0 0 0" result="na"/>
<feDiffuseLighting in="na" surfaceScale="2" diffuseConstant="1.2" lighting-color="#ffffff" result="d"><feDistantLight azimuth="235" elevation="50"/></feDiffuseLighting>
<feComposite in="SourceGraphic" in2="d" operator="arithmetic" k1="1.15" k2="0" k3="0" k4="0" result="m"/>
<feComposite in="m" in2="SourceAlpha" operator="in"/>
</filter>
<filter id="ornL2" x="0" y="0" width="100%" height="100%" color-interpolation-filters="sRGB">
<feTurbulence type="fractalNoise" baseFrequency="0.22" numOctaves="1" seed="11" result="n"/>
<feColorMatrix in="n" type="matrix" values="0 0 0 0 0  0 0 0 0 0  0 0 0 0 0  1 0 0 0 0" result="na"/>
<feDiffuseLighting in="na" surfaceScale="2.2" diffuseConstant="1.15" lighting-color="#ffffff" result="d"><feDistantLight azimuth="235" elevation="50"/></feDiffuseLighting>
<feComposite in="SourceGraphic" in2="d" operator="arithmetic" k1="1.15" k2="0" k3="0" k4="0" result="m"/>
<feComposite in="m" in2="SourceAlpha" operator="in"/>
</filter>
<filter id="embSD" x="-10%" y="-10%" width="120%" height="120%" color-interpolation-filters="sRGB">
<feGaussianBlur in="SourceAlpha" stdDeviation="2.5" result="b"/>
<feSpecularLighting in="b" surfaceScale="4" specularConstant="0.9" specularExponent="25" lighting-color="#70e8b0" result="s"><feDistantLight azimuth="235" elevation="32"/></feSpecularLighting>
<feComposite in="s" in2="SourceAlpha" operator="in" result="s2"/>
<feComposite in="SourceGraphic" in2="s2" operator="arithmetic" k1="0" k2="1" k3="0.8" k4="0"/>
</filter>
<filter id="embSL" x="-10%" y="-10%" width="120%" height="120%" color-interpolation-filters="sRGB">
<feGaussianBlur in="SourceAlpha" stdDeviation="2.5" result="b"/>
<feSpecularLighting in="b" surfaceScale="4" specularConstant="0.9" specularExponent="25" lighting-color="#f4fff0" result="s"><feDistantLight azimuth="235" elevation="32"/></feSpecularLighting>
<feComposite in="s" in2="SourceAlpha" operator="in" result="s2"/>
<feComposite in="SourceGraphic" in2="s2" operator="arithmetic" k1="0" k2="1" k3="0.6" k4="0"/>
</filter></defs>
<g transform="translate(0,0)">
<g fill="#0b7d56" filter="url(#embD)">
<path d="M185.2,170.2 C188,171 190,172.5 191.6,173.7 C194,175 196,176 196.8,177.1 C198.5,179 199.4,181 199.4,182.3 C199.2,186 198.5,190 197.7,192.7 C196,197 194,201 192.5,204 C191.5,207 191.2,210 191.6,213.5 C193,216 195.5,218 198.6,218.7 L202,221 L203,228 C196,229.5 188,229.5 183.9,228.2 C181,226 179.5,224 178.7,221.3 C177.5,218 177.3,215 177.8,211.8 C178.5,208 179.5,204.5 181.3,201.4 C183.5,198 186,194.5 187.3,191 C187,187 185.5,184 183.9,180.6 C183.5,177 184,173 185.2,170.2 Z"/>
<path d="M205,224.5 C198,228.5 189,231 175.5,232.3 C176,233.6 177,234.8 178.5,235 C189,234.6 199,233.6 206,231 Z"/>
<path d="M199,219 C198,211 198,203 199.5,196 C202,191 206,189 209.7,190.6 C211,186 213,183.5 215,182.8 C218,180.5 221,179.8 223.6,179.8 C227,179.6 230.5,180 233,180.6 C236.5,181.5 239.5,183 241.8,184.5 C245,185.5 248.5,186.2 251.3,187 C254,188 256,189 257.3,189.7 L262,190 L270,230 C262,238 250,242 240,242 C232,240 224,236 219,234 C213,233 208,231.5 204,229 C201.5,226 199.8,223 199,219 Z"/>
<path d="M257,190 C260,188.5 262,189.2 264,189.7 C275,187.8 286,186.8 293.3,187 C302,187.5 309,188.5 315,189.7 C320,191.5 324,194 325.8,196.2 C328,197 330,197.8 331.2,198.4 C335,202 339,206 342,209.2 C346,213 350,217.5 352.8,221 C355,224.5 357,228 358.2,232 C359.5,236 360.2,240.5 360.4,245 C360.8,251 361.2,257 361.5,262 C362.5,266 363.5,270 364.7,274 L345,279 C335,277.5 315,277 302,277 L283,276 C275,274 268,272 262,270.5 C252,266 243,258 236,247 C230,242 224,239 219,236 C215,234 212,232 210,231 Z"/>
<path d="M238,246 C229,261 222,273 217.3,281 C211,291 206,298 203.6,301.4 C200,310 198.5,317 198.2,322 L226,322 C225.5,314 224.8,306 224.5,301 C230,291 238,282 245,276 C251,272.5 257,270 264,268 Z"/>
<path d="M241,291 C248,285 256,277 263,271 C268,268.5 271,269 272,272 C275,278 278,284 280,289 C280,295 279.5,300 279,305 C272,310 265,314 258,316 C252,311 246,302 241,291 Z"/>
<path d="M300,275 C303,288 306,297 307,302 L308,322 L331.5,322 C329,312 327.5,302 327,295 C330,290 334,286.5 337.5,285 C340,282 343,279.5 346,277 Z"/>
<path d="M343,276 C351,287 359,296 364.6,304 C366,311 366,316 366,321 L389,321 C390,315 390,311 389.5,307 C380,299 372,292 366.5,285 C363,276 361,266 359.5,255 Z"/>
<path d="M393.8,244 C399,247 401.5,253 401,258 C400.5,263 397.5,266 393.8,267 C390,266 386.8,263 386.5,258 C386,253 388.5,247 393.8,244 Z"/>
<path d="M179.6,329 L399.7,329 C403,336 407,343 411.5,349.5 C406,351.5 401,352 396,351.5 C388,354 378,353 370,353.5 C360,354.5 350,352.5 340,354 C330,355 318,353 308,354.5 C298,355.5 285,353.5 275,354.5 C265,355.5 252,353 240,354.5 C228,355 215,353 205,354 C192,354 180,352 171,352 C166,352 163,351.5 161.5,350.3 C166,344 172,336 179.6,329 Z"/>
<path d="M360,252 C362.5,266 366,278 374.3,281.7 C380,284 388,281 391,274 C392.5,269 393,265 393.6,263" fill="none" stroke="#0b7d56" stroke-width="3.2" stroke-linecap="round"/>
</g>
<path d="M196.5,197 C194.5,201 192.5,205 191.8,209 C191.3,212 191.6,214.5 193,216.5 C195,218 197,218.6 198.8,218.6 C198.2,212 198.3,205 199.2,196 Z" fill="#000"/>
<g clip-path="url(#esil)"><g fill="#033a26" opacity="0.55" filter="url(#blur2)"><path d="M262,262 C275,270 300,272 330,268 L334,276 L300,277 L264,271 Z"/><path d="M268,212 L274,256 L268,258 L262,214 Z"/><path d="M305,280 C310,290 312,305 312,320 L309,320 C308,305 306,292 302,282 Z"/><path d="M226,300 C230,290 238,282 246,277 L250,279 C242,286 234,294 229,304 Z"/></g>
<g fill="none" stroke-linecap="round" filter="url(#blur1)"><path d="M243,266 C234,280 226,291 214,310" stroke="#8ff0c4" stroke-width="3.5"/><path d="M188,175 C195,182 194,192 188,201 C184,207 183,214 185,221" stroke="#4cc894" stroke-width="2.2"/><path d="M178,233 C188,232 197,231 204,228" stroke="#8ff0c4" stroke-width="1.6"/><path d="M255,205 C262,210 266,216 266,226" stroke="#8ff0c4" stroke-width="5"/><path d="M215,212 C222,208 228,210 230,218" stroke="#4cc894" stroke-width="2.5"/><path d="M352,222 C357,232 358,242 356,254" stroke="#4cc894" stroke-width="2"/><path d="M370,290 C377,297 381,303 385,312" stroke="#4cc894" stroke-width="2.5"/><path d="M318,285 C319,296 319,306 319,316" stroke="#4cc894" stroke-width="2.5"/><path d="M247,289 C254,283 260,278 266,274" stroke="#8ff0c4" stroke-width="2"/><path d="M240,250 C250,262 262,268 270,270" stroke="#4cc894" stroke-width="2"/></g></g>
<g clip-path="url(#esil)"><ellipse cx="225" cy="213" rx="9" ry="7" fill="#8ff0c4" opacity="0.45" filter="url(#blur2)"/><path d="M203,225 C206,229 210,231.5 215,232.5" fill="none" stroke="#033a26" stroke-width="2.2" opacity="0.8" filter="url(#blur1)"/><path d="M237,194 C243,191 250,192 253,197 C253,202 249,206 244,207" fill="none" stroke="#033a26" stroke-width="2.5" opacity="0.7" filter="url(#blur1)"/><path d="M235,187 C245,186 254,190 257,199 C258,208 255,216 250,223" fill="none" stroke="#4cc894" stroke-width="1.8" opacity="0.8"/><path d="M236,197 C240,210 240,225 236,239" fill="none" stroke="#4cc894" stroke-width="1.4" opacity="0.7"/><path d="M237,197 C241,210 241,225 237,239" fill="none" stroke="#033a26" stroke-width="1" opacity="0.5" transform="translate(2,0)"/><path d="M214,204 C218,202 224,202 228,205" fill="none" stroke="#033a26" stroke-width="1.4" opacity="0.6"/></g>
<g stroke="#033a26" stroke-width="0.9" opacity="0.6"><path d="M184,178 L189,176"/><path d="M185,185 L190,184"/><path d="M186,192 L191,192"/><path d="M182,199 L187,200"/><path d="M179,206 L184,207"/><path d="M178,213 L183,213"/><path d="M179,220 L184,219"/><path d="M183,226 L187,223"/></g>
<g fill="#086a48" filter="url(#ornD)">
<path d="M264,189.7 C275,187.8 286,186.8 293.3,187 C302,187.5 309,188.5 315,189.7 C320,191.5 323.5,194 325.8,196.2 C330,202 333,207 334.4,212.5 C335.5,218 335.8,223 335.5,228.7 C334.8,232.5 333.8,236 332.3,239.5 C330.5,243 329,246 328,249.3 C328.5,254 329,259 329,264.4 C328,266.5 327,268.5 325.8,269.8 C318,269.5 311,269 304,268.7 C300,269.3 297,269.8 293.3,269.8 C289,268.8 286,267.8 282.5,266.6 C276,264 270,261.5 264,259 C260.5,256.5 257.5,254 254.3,251.4 C256,247 258,243 259.7,239.5 C263,232 266,225 268.4,217.9 C268,212 267,206.5 266.2,201.6 C265.5,197.5 264.8,193.5 264,189.7 Z"/>
<path d="M334.4,240.6 C342,241.5 350,242.2 358.2,242.8 C359,247 359,251 358.2,255.8 C350,256.5 342,257.2 334.4,258 C333,252 333,246 334.4,240.6 Z"/>
<path d="M209.7,190.6 C211,186 213,183.5 215,182.8 C218,180.5 221,179.8 223.6,179.8 C227,179.6 230.5,180 233,180.6 C234.5,183 234.5,186 233,189 C226,191 218,192 209.7,190.6 Z"/>
<path d="M199.3,198 C201,195 205,195 208.9,197 C209.5,201 209,205 208,208 C205,209 202,208.5 199.5,207 Z"/>
<path d="M221,237 C228,235 238,236 247,238 C247,243 244,247 240,248.6 C232,249 226,247 221,243 Z"/>
<path d="M198,310 C211.75,308 225.5,308 226.0,309 L226.0,321 C211.75,322 198,322 198,321 Z"/>
<path d="M307.5,308 C319.5,306 331.5,306 332.0,307 L332.0,319 C319.5,320 307.5,320 307.5,319 Z"/>
<path d="M365,306 C377.0,304 389,304 389.5,305 L389.5,317 C377.0,318 365,318 365,317 Z"/>
<path d="M243,293 C252,287 265,283 279.5,290 L279,305 C272,310 265,314 258,316 C252,311 247,303 243,293 Z"/>
<circle cx="228" cy="262" r="6.5"/>
<circle cx="286" cy="281" r="5"/>
<circle cx="309" cy="287" r="5"/>
<circle cx="367" cy="284" r="5.5"/>
<circle cx="285" cy="274" r="4"/>
</g>
<g clip-path="url(#blclip)" fill="none" stroke="#4cc894" stroke-width="0.8" opacity="0.45"><circle cx="307.4" cy="190.1" r="2.1"/><circle cx="273.3" cy="248.4" r="3.1"/><circle cx="328.2" cy="195.1" r="2.5"/><circle cx="257.4" cy="205.9" r="2.7"/><circle cx="257.2" cy="204.3" r="3.0"/><circle cx="299.7" cy="206.1" r="2.9"/><circle cx="321.4" cy="188.5" r="3.4"/><circle cx="312.2" cy="215.9" r="1.9"/><circle cx="333.5" cy="215.6" r="1.7"/><circle cx="262.9" cy="257.5" r="2.9"/><circle cx="321.2" cy="247.8" r="2.7"/><circle cx="334.8" cy="219.0" r="2.8"/><circle cx="323.0" cy="238.7" r="3.5"/><circle cx="302.3" cy="245.8" r="1.6"/><circle cx="273.7" cy="211.7" r="1.7"/><circle cx="274.1" cy="196.3" r="2.1"/><circle cx="307.1" cy="217.9" r="2.4"/><circle cx="272.2" cy="209.9" r="3.7"/><circle cx="308.1" cy="237.9" r="1.9"/><circle cx="314.8" cy="201.4" r="2.4"/><circle cx="336.1" cy="240.5" r="2.8"/><circle cx="311.1" cy="257.1" r="3.3"/><circle cx="273.8" cy="190.6" r="2.2"/><circle cx="277.0" cy="205.3" r="3.7"/><circle cx="326.9" cy="213.8" r="3.0"/><circle cx="287.4" cy="263.0" r="2.6"/><circle cx="276.7" cy="208.2" r="2.8"/><circle cx="276.5" cy="235.9" r="3.6"/><circle cx="287.8" cy="206.0" r="3.8"/><circle cx="296.8" cy="195.5" r="1.6"/><circle cx="264.0" cy="239.5" r="3.3"/><circle cx="289.6" cy="193.2" r="2.4"/><circle cx="336.7" cy="231.4" r="3.7"/><circle cx="325.6" cy="188.9" r="3.2"/><circle cx="310.9" cy="232.0" r="2.1"/><circle cx="307.6" cy="197.1" r="2.5"/><circle cx="292.2" cy="266.2" r="3.5"/><circle cx="276.6" cy="229.0" r="1.9"/><circle cx="329.8" cy="259.4" r="2.2"/><circle cx="307.4" cy="237.9" r="1.9"/><circle cx="317.5" cy="232.2" r="3.3"/><circle cx="298.5" cy="188.0" r="2.2"/><circle cx="256.6" cy="264.2" r="3.5"/><circle cx="323.2" cy="213.2" r="1.6"/><circle cx="327.0" cy="265.6" r="1.7"/><circle cx="294.9" cy="193.7" r="3.2"/><circle cx="317.8" cy="198.5" r="2.6"/><circle cx="300.1" cy="209.7" r="3.5"/><circle cx="289.7" cy="205.4" r="2.7"/><circle cx="314.9" cy="204.5" r="2.2"/><circle cx="336.6" cy="241.3" r="2.5"/><circle cx="297.4" cy="197.9" r="2.0"/><circle cx="282.7" cy="236.2" r="2.0"/><circle cx="273.1" cy="193.8" r="3.0"/><circle cx="273.8" cy="262.2" r="3.5"/><circle cx="260.8" cy="207.5" r="3.0"/><circle cx="272.6" cy="198.8" r="3.7"/><circle cx="301.8" cy="226.8" r="3.3"/><circle cx="321.2" cy="203.6" r="1.7"/><circle cx="290.3" cy="222.7" r="2.6"/><circle cx="314.8" cy="243.2" r="3.8"/><circle cx="263.1" cy="221.0" r="2.3"/><circle cx="325.7" cy="208.4" r="1.9"/><circle cx="291.8" cy="222.6" r="2.1"/><circle cx="275.5" cy="263.7" r="2.5"/><circle cx="325.6" cy="233.1" r="1.6"/><circle cx="336.9" cy="256.6" r="3.7"/><circle cx="331.0" cy="257.6" r="1.9"/><circle cx="294.8" cy="205.5" r="2.4"/><circle cx="259.8" cy="219.1" r="3.8"/><circle cx="340.4" cy="253.5" r="1.8"/><circle cx="344.2" cy="256.3" r="2.5"/><circle cx="347.3" cy="252.5" r="1.4"/><circle cx="341.1" cy="256.5" r="2.0"/><circle cx="347.0" cy="253.0" r="1.3"/><circle cx="348.0" cy="249.0" r="2.3"/><circle cx="337.8" cy="256.4" r="1.3"/><circle cx="338.5" cy="250.5" r="2.1"/><circle cx="339.6" cy="242.9" r="2.4"/><circle cx="339.9" cy="250.5" r="2.0"/><circle cx="344.1" cy="250.3" r="1.9"/><circle cx="356.4" cy="244.3" r="2.1"/><circle cx="339.7" cy="247.3" r="2.1"/><circle cx="341.2" cy="246.1" r="2.2"/></g>
<path d="M264,189.7 C275,187.8 286,186.8 293.3,187 C302,187.5 309,188.5 315,189.7 C320,191.5 323.5,194 325.8,196.2 C330,202 333,207 334.4,212.5 C335.5,218 335.8,223 335.5,228.7 C334.8,232.5 333.8,236 332.3,239.5 C330.5,243 329,246 328,249.3 C328.5,254 329,259 329,264.4 C328,266.5 327,268.5 325.8,269.8 C318,269.5 311,269 304,268.7 C300,269.3 297,269.8 293.3,269.8 C289,268.8 286,267.8 282.5,266.6 C276,264 270,261.5 264,259 C260.5,256.5 257.5,254 254.3,251.4 C256,247 258,243 259.7,239.5 C263,232 266,225 268.4,217.9 C268,212 267,206.5 266.2,201.6 C265.5,197.5 264.8,193.5 264,189.7 Z" fill="none" stroke="#4cc894" stroke-width="1" opacity="0.7"/>
<path d="M270,196 C290,192 310,193 322,200 C330,213 331,228 325,243 C320,256 305,262 290,262 C275,258 266,246 266,230 C266,215 268,205 270,196 Z" fill="none" stroke="#4cc894" stroke-width="1.1" opacity="0.75"/>
<path d="M274,202 C290,198 306,199 317,205 C324,216 325,229 320,241 C314,252 302,256 290,256 C279,253 272,244 272,230 C272,218 273,209 274,202 Z" fill="none" stroke="#033a26" stroke-width="1" opacity="0.6"/>
<g fill="none" stroke="#4cc894" stroke-width="0.9" opacity="0.6"><circle cx="294" cy="215" r="6"/><circle cx="294" cy="233" r="7"/><circle cx="282" cy="224" r="4"/><circle cx="307" cy="224" r="4"/></g>
<rect x="177.2" y="321.8" width="219.2" height="7.2" fill="#3aaa80"/>
<g clip-path="url(#lotclip)"><g fill="#086a48" filter="url(#embD)"><path d="M177,331 C183,336 194,340 193,346 C192,352 183,354 177,352 C171,354 162,352 161,346 C160,340 171,336 177,331 Z"/><path d="M211,331 C217,336 228,340 227,346 C226,352 217,354 211,352 C205,354 196,352 195,346 C194,340 205,336 211,331 Z"/><path d="M247,331 C253,336 264,340 263,346 C262,352 253,354 247,352 C241,354 232,352 231,346 C230,340 241,336 247,331 Z"/><path d="M286,331 C292,336 303,340 302,346 C301,352 292,354 286,352 C280,354 271,352 270,346 C269,340 280,336 286,331 Z"/><path d="M321,331 C327,336 338,340 337,346 C336,352 327,354 321,352 C315,354 306,352 305,346 C304,340 315,336 321,331 Z"/><path d="M357,331 C363,336 374,340 373,346 C372,352 363,354 357,352 C351,354 342,352 341,346 C340,340 351,336 357,331 Z"/><path d="M392,331 C398,336 409,340 408,346 C407,352 398,354 392,352 C386,354 377,352 376,346 C375,340 386,336 392,331 Z"/></g><g fill="none" stroke="#4cc894" stroke-width="1.1" opacity="0.9"><path d="M177,331 C183,336 194,340 193,346 C192,352 183,354 177,352 C171,354 162,352 161,346 C160,340 171,336 177,331 Z"/><path d="M211,331 C217,336 228,340 227,346 C226,352 217,354 211,352 C205,354 196,352 195,346 C194,340 205,336 211,331 Z"/><path d="M247,331 C253,336 264,340 263,346 C262,352 253,354 247,352 C241,354 232,352 231,346 C230,340 241,336 247,331 Z"/><path d="M286,331 C292,336 303,340 302,346 C301,352 292,354 286,352 C280,354 271,352 270,346 C269,340 280,336 286,331 Z"/><path d="M321,331 C327,336 338,340 337,346 C336,352 327,354 321,352 C315,354 306,352 305,346 C304,340 315,336 321,331 Z"/><path d="M357,331 C363,336 374,340 373,346 C372,352 363,354 357,352 C351,354 342,352 341,346 C340,340 351,336 357,331 Z"/><path d="M392,331 C398,336 409,340 408,346 C407,352 398,354 392,352 C386,354 377,352 376,346 C375,340 386,336 392,331 Z"/></g><g fill="none" stroke="#4cc894" stroke-width="0.9" opacity="0.8"><circle cx="173" cy="345" r="2.6"/><circle cx="181" cy="345" r="2.6"/><circle cx="207" cy="345" r="2.6"/><circle cx="215" cy="345" r="2.6"/><circle cx="243" cy="345" r="2.6"/><circle cx="251" cy="345" r="2.6"/><circle cx="282" cy="345" r="2.6"/><circle cx="290" cy="345" r="2.6"/><circle cx="317" cy="345" r="2.6"/><circle cx="325" cy="345" r="2.6"/><circle cx="353" cy="345" r="2.6"/><circle cx="361" cy="345" r="2.6"/><circle cx="388" cy="345" r="2.6"/><circle cx="396" cy="345" r="2.6"/></g><g fill="#086a48" filter="url(#ornD)"><path d="M160,329 L412,329 L412,334 L160,334 Z"/></g></g>
<path d="M162,350 C200,356 370,356 411,350" fill="none" stroke="#4cc894" stroke-width="1" opacity="0.6"/>
</g>
<g transform="translate(312,0)">
<g fill="#b2dcb0" filter="url(#embL)">
<path d="M185.2,170.2 C188,171 190,172.5 191.6,173.7 C194,175 196,176 196.8,177.1 C198.5,179 199.4,181 199.4,182.3 C199.2,186 198.5,190 197.7,192.7 C196,197 194,201 192.5,204 C191.5,207 191.2,210 191.6,213.5 C193,216 195.5,218 198.6,218.7 L202,221 L203,228 C196,229.5 188,229.5 183.9,228.2 C181,226 179.5,224 178.7,221.3 C177.5,218 177.3,215 177.8,211.8 C178.5,208 179.5,204.5 181.3,201.4 C183.5,198 186,194.5 187.3,191 C187,187 185.5,184 183.9,180.6 C183.5,177 184,173 185.2,170.2 Z"/>
<path d="M205,224.5 C198,228.5 189,231 175.5,232.3 C176,233.6 177,234.8 178.5,235 C189,234.6 199,233.6 206,231 Z"/>
<path d="M199,219 C198,211 198,203 199.5,196 C202,191 206,189 209.7,190.6 C211,186 213,183.5 215,182.8 C218,180.5 221,179.8 223.6,179.8 C227,179.6 230.5,180 233,180.6 C236.5,181.5 239.5,183 241.8,184.5 C245,185.5 248.5,186.2 251.3,187 C254,188 256,189 257.3,189.7 L262,190 L270,230 C262,238 250,242 240,242 C232,240 224,236 219,234 C213,233 208,231.5 204,229 C201.5,226 199.8,223 199,219 Z"/>
<path d="M257,190 C260,188.5 262,189.2 264,189.7 C275,187.8 286,186.8 293.3,187 C302,187.5 309,188.5 315,189.7 C320,191.5 324,194 325.8,196.2 C328,197 330,197.8 331.2,198.4 C335,202 339,206 342,209.2 C346,213 350,217.5 352.8,221 C355,224.5 357,228 358.2,232 C359.5,236 360.2,240.5 360.4,245 C360.8,251 361.2,257 361.5,262 C362.5,266 363.5,270 364.7,274 L345,279 C335,277.5 315,277 302,277 L283,276 C275,274 268,272 262,270.5 C252,266 243,258 236,247 C230,242 224,239 219,236 C215,234 212,232 210,231 Z"/>
<path d="M238,246 C229,261 222,273 217.3,281 C211,291 206,298 203.6,301.4 C200,310 198.5,317 198.2,322 L226,322 C225.5,314 224.8,306 224.5,301 C230,291 238,282 245,276 C251,272.5 257,270 264,268 Z"/>
<path d="M241,291 C248,285 256,277 263,271 C268,268.5 271,269 272,272 C275,278 278,284 280,289 C280,295 279.5,300 279,305 C272,310 265,314 258,316 C252,311 246,302 241,291 Z"/>
<path d="M300,275 C303,288 306,297 307,302 L308,322 L331.5,322 C329,312 327.5,302 327,295 C330,290 334,286.5 337.5,285 C340,282 343,279.5 346,277 Z"/>
<path d="M343,276 C351,287 359,296 364.6,304 C366,311 366,316 366,321 L389,321 C390,315 390,311 389.5,307 C380,299 372,292 366.5,285 C363,276 361,266 359.5,255 Z"/>
<path d="M393.8,244 C399,247 401.5,253 401,258 C400.5,263 397.5,266 393.8,267 C390,266 386.8,263 386.5,258 C386,253 388.5,247 393.8,244 Z"/>
<path d="M179.6,329 L399.7,329 C403,336 407,343 411.5,349.5 C406,351.5 401,352 396,351.5 C388,354 378,353 370,353.5 C360,354.5 350,352.5 340,354 C330,355 318,353 308,354.5 C298,355.5 285,353.5 275,354.5 C265,355.5 252,353 240,354.5 C228,355 215,353 205,354 C192,354 180,352 171,352 C166,352 163,351.5 161.5,350.3 C166,344 172,336 179.6,329 Z"/>
<path d="M360,252 C362.5,266 366,278 374.3,281.7 C380,284 388,281 391,274 C392.5,269 393,265 393.6,263" fill="none" stroke="#b2dcb0" stroke-width="3.2" stroke-linecap="round"/>
</g>
<path d="M196.5,197 C194.5,201 192.5,205 191.8,209 C191.3,212 191.6,214.5 193,216.5 C195,218 197,218.6 198.8,218.6 C198.2,212 198.3,205 199.2,196 Z" fill="#000"/>
<g clip-path="url(#esil)"><g fill="#4a7a50" opacity="0.55" filter="url(#blur2)"><path d="M262,262 C275,270 300,272 330,268 L334,276 L300,277 L264,271 Z"/><path d="M268,212 L274,256 L268,258 L262,214 Z"/><path d="M305,280 C310,290 312,305 312,320 L309,320 C308,305 306,292 302,282 Z"/><path d="M226,300 C230,290 238,282 246,277 L250,279 C242,286 234,294 229,304 Z"/></g>
<g fill="none" stroke-linecap="round" filter="url(#blur1)"><path d="M243,266 C234,280 226,291 214,310" stroke="#f4fff0" stroke-width="3.5"/><path d="M188,175 C195,182 194,192 188,201 C184,207 183,214 185,221" stroke="#d0f0cc" stroke-width="2.2"/><path d="M178,233 C188,232 197,231 204,228" stroke="#f4fff0" stroke-width="1.6"/><path d="M255,205 C262,210 266,216 266,226" stroke="#f4fff0" stroke-width="5"/><path d="M215,212 C222,208 228,210 230,218" stroke="#d0f0cc" stroke-width="2.5"/><path d="M352,222 C357,232 358,242 356,254" stroke="#d0f0cc" stroke-width="2"/><path d="M370,290 C377,297 381,303 385,312" stroke="#d0f0cc" stroke-width="2.5"/><path d="M318,285 C319,296 319,306 319,316" stroke="#d0f0cc" stroke-width="2.5"/><path d="M247,289 C254,283 260,278 266,274" stroke="#f4fff0" stroke-width="2"/><path d="M240,250 C250,262 262,268 270,270" stroke="#d0f0cc" stroke-width="2"/></g></g>
<g clip-path="url(#esil)"><ellipse cx="225" cy="213" rx="9" ry="7" fill="#f4fff0" opacity="0.45" filter="url(#blur2)"/><path d="M203,225 C206,229 210,231.5 215,232.5" fill="none" stroke="#4a7a50" stroke-width="2.2" opacity="0.8" filter="url(#blur1)"/><path d="M237,194 C243,191 250,192 253,197 C253,202 249,206 244,207" fill="none" stroke="#4a7a50" stroke-width="2.5" opacity="0.7" filter="url(#blur1)"/><path d="M235,187 C245,186 254,190 257,199 C258,208 255,216 250,223" fill="none" stroke="#d0f0cc" stroke-width="1.8" opacity="0.8"/><path d="M236,197 C240,210 240,225 236,239" fill="none" stroke="#d0f0cc" stroke-width="1.4" opacity="0.7"/><path d="M237,197 C241,210 241,225 237,239" fill="none" stroke="#4a7a50" stroke-width="1" opacity="0.5" transform="translate(2,0)"/><path d="M214,204 C218,202 224,202 228,205" fill="none" stroke="#4a7a50" stroke-width="1.4" opacity="0.6"/></g>
<g stroke="#4a7a50" stroke-width="0.9" opacity="0.6"><path d="M184,178 L189,176"/><path d="M185,185 L190,184"/><path d="M186,192 L191,192"/><path d="M182,199 L187,200"/><path d="M179,206 L184,207"/><path d="M178,213 L183,213"/><path d="M179,220 L184,219"/><path d="M183,226 L187,223"/></g>
<g fill="#a6d2a4" filter="url(#ornL)">
<path d="M264,189.7 C275,187.8 286,186.8 293.3,187 C302,187.5 309,188.5 315,189.7 C320,191.5 323.5,194 325.8,196.2 C330,202 333,207 334.4,212.5 C335.5,218 335.8,223 335.5,228.7 C334.8,232.5 333.8,236 332.3,239.5 C330.5,243 329,246 328,249.3 C328.5,254 329,259 329,264.4 C328,266.5 327,268.5 325.8,269.8 C318,269.5 311,269 304,268.7 C300,269.3 297,269.8 293.3,269.8 C289,268.8 286,267.8 282.5,266.6 C276,264 270,261.5 264,259 C260.5,256.5 257.5,254 254.3,251.4 C256,247 258,243 259.7,239.5 C263,232 266,225 268.4,217.9 C268,212 267,206.5 266.2,201.6 C265.5,197.5 264.8,193.5 264,189.7 Z"/>
<path d="M334.4,240.6 C342,241.5 350,242.2 358.2,242.8 C359,247 359,251 358.2,255.8 C350,256.5 342,257.2 334.4,258 C333,252 333,246 334.4,240.6 Z"/>
<path d="M209.7,190.6 C211,186 213,183.5 215,182.8 C218,180.5 221,179.8 223.6,179.8 C227,179.6 230.5,180 233,180.6 C234.5,183 234.5,186 233,189 C226,191 218,192 209.7,190.6 Z"/>
<path d="M199.3,198 C201,195 205,195 208.9,197 C209.5,201 209,205 208,208 C205,209 202,208.5 199.5,207 Z"/>
<path d="M221,237 C228,235 238,236 247,238 C247,243 244,247 240,248.6 C232,249 226,247 221,243 Z"/>
<path d="M198,310 C211.75,308 225.5,308 226.0,309 L226.0,321 C211.75,322 198,322 198,321 Z"/>
<path d="M307.5,308 C319.5,306 331.5,306 332.0,307 L332.0,319 C319.5,320 307.5,320 307.5,319 Z"/>
<path d="M365,306 C377.0,304 389,304 389.5,305 L389.5,317 C377.0,318 365,318 365,317 Z"/>
<path d="M243,293 C252,287 265,283 279.5,290 L279,305 C272,310 265,314 258,316 C252,311 247,303 243,293 Z"/>
<circle cx="228" cy="262" r="6.5"/>
<circle cx="286" cy="281" r="5"/>
<circle cx="309" cy="287" r="5"/>
<circle cx="367" cy="284" r="5.5"/>
<circle cx="285" cy="274" r="4"/>
</g>
<g clip-path="url(#blclip)" fill="none" stroke="#4a7a50" stroke-width="0.8" opacity="0.55"><circle cx="307.4" cy="190.1" r="2.1"/><circle cx="273.3" cy="248.4" r="3.1"/><circle cx="328.2" cy="195.1" r="2.5"/><circle cx="257.4" cy="205.9" r="2.7"/><circle cx="257.2" cy="204.3" r="3.0"/><circle cx="299.7" cy="206.1" r="2.9"/><circle cx="321.4" cy="188.5" r="3.4"/><circle cx="312.2" cy="215.9" r="1.9"/><circle cx="333.5" cy="215.6" r="1.7"/><circle cx="262.9" cy="257.5" r="2.9"/><circle cx="321.2" cy="247.8" r="2.7"/><circle cx="334.8" cy="219.0" r="2.8"/><circle cx="323.0" cy="238.7" r="3.5"/><circle cx="302.3" cy="245.8" r="1.6"/><circle cx="273.7" cy="211.7" r="1.7"/><circle cx="274.1" cy="196.3" r="2.1"/><circle cx="307.1" cy="217.9" r="2.4"/><circle cx="272.2" cy="209.9" r="3.7"/><circle cx="308.1" cy="237.9" r="1.9"/><circle cx="314.8" cy="201.4" r="2.4"/><circle cx="336.1" cy="240.5" r="2.8"/><circle cx="311.1" cy="257.1" r="3.3"/><circle cx="273.8" cy="190.6" r="2.2"/><circle cx="277.0" cy="205.3" r="3.7"/><circle cx="326.9" cy="213.8" r="3.0"/><circle cx="287.4" cy="263.0" r="2.6"/><circle cx="276.7" cy="208.2" r="2.8"/><circle cx="276.5" cy="235.9" r="3.6"/><circle cx="287.8" cy="206.0" r="3.8"/><circle cx="296.8" cy="195.5" r="1.6"/><circle cx="264.0" cy="239.5" r="3.3"/><circle cx="289.6" cy="193.2" r="2.4"/><circle cx="336.7" cy="231.4" r="3.7"/><circle cx="325.6" cy="188.9" r="3.2"/><circle cx="310.9" cy="232.0" r="2.1"/><circle cx="307.6" cy="197.1" r="2.5"/><circle cx="292.2" cy="266.2" r="3.5"/><circle cx="276.6" cy="229.0" r="1.9"/><circle cx="329.8" cy="259.4" r="2.2"/><circle cx="307.4" cy="237.9" r="1.9"/><circle cx="317.5" cy="232.2" r="3.3"/><circle cx="298.5" cy="188.0" r="2.2"/><circle cx="256.6" cy="264.2" r="3.5"/><circle cx="323.2" cy="213.2" r="1.6"/><circle cx="327.0" cy="265.6" r="1.7"/><circle cx="294.9" cy="193.7" r="3.2"/><circle cx="317.8" cy="198.5" r="2.6"/><circle cx="300.1" cy="209.7" r="3.5"/><circle cx="289.7" cy="205.4" r="2.7"/><circle cx="314.9" cy="204.5" r="2.2"/><circle cx="336.6" cy="241.3" r="2.5"/><circle cx="297.4" cy="197.9" r="2.0"/><circle cx="282.7" cy="236.2" r="2.0"/><circle cx="273.1" cy="193.8" r="3.0"/><circle cx="273.8" cy="262.2" r="3.5"/><circle cx="260.8" cy="207.5" r="3.0"/><circle cx="272.6" cy="198.8" r="3.7"/><circle cx="301.8" cy="226.8" r="3.3"/><circle cx="321.2" cy="203.6" r="1.7"/><circle cx="290.3" cy="222.7" r="2.6"/><circle cx="314.8" cy="243.2" r="3.8"/><circle cx="263.1" cy="221.0" r="2.3"/><circle cx="325.7" cy="208.4" r="1.9"/><circle cx="291.8" cy="222.6" r="2.1"/><circle cx="275.5" cy="263.7" r="2.5"/><circle cx="325.6" cy="233.1" r="1.6"/><circle cx="336.9" cy="256.6" r="3.7"/><circle cx="331.0" cy="257.6" r="1.9"/><circle cx="294.8" cy="205.5" r="2.4"/><circle cx="259.8" cy="219.1" r="3.8"/><circle cx="340.4" cy="253.5" r="1.8"/><circle cx="344.2" cy="256.3" r="2.5"/><circle cx="347.3" cy="252.5" r="1.4"/><circle cx="341.1" cy="256.5" r="2.0"/><circle cx="347.0" cy="253.0" r="1.3"/><circle cx="348.0" cy="249.0" r="2.3"/><circle cx="337.8" cy="256.4" r="1.3"/><circle cx="338.5" cy="250.5" r="2.1"/><circle cx="339.6" cy="242.9" r="2.4"/><circle cx="339.9" cy="250.5" r="2.0"/><circle cx="344.1" cy="250.3" r="1.9"/><circle cx="356.4" cy="244.3" r="2.1"/><circle cx="339.7" cy="247.3" r="2.1"/><circle cx="341.2" cy="246.1" r="2.2"/></g>
<path d="M264,189.7 C275,187.8 286,186.8 293.3,187 C302,187.5 309,188.5 315,189.7 C320,191.5 323.5,194 325.8,196.2 C330,202 333,207 334.4,212.5 C335.5,218 335.8,223 335.5,228.7 C334.8,232.5 333.8,236 332.3,239.5 C330.5,243 329,246 328,249.3 C328.5,254 329,259 329,264.4 C328,266.5 327,268.5 325.8,269.8 C318,269.5 311,269 304,268.7 C300,269.3 297,269.8 293.3,269.8 C289,268.8 286,267.8 282.5,266.6 C276,264 270,261.5 264,259 C260.5,256.5 257.5,254 254.3,251.4 C256,247 258,243 259.7,239.5 C263,232 266,225 268.4,217.9 C268,212 267,206.5 266.2,201.6 C265.5,197.5 264.8,193.5 264,189.7 Z" fill="none" stroke="#d0f0cc" stroke-width="1" opacity="0.7"/>
<path d="M270,196 C290,192 310,193 322,200 C330,213 331,228 325,243 C320,256 305,262 290,262 C275,258 266,246 266,230 C266,215 268,205 270,196 Z" fill="none" stroke="#d0f0cc" stroke-width="1.1" opacity="0.75"/>
<path d="M274,202 C290,198 306,199 317,205 C324,216 325,229 320,241 C314,252 302,256 290,256 C279,253 272,244 272,230 C272,218 273,209 274,202 Z" fill="none" stroke="#4a7a50" stroke-width="1" opacity="0.6"/>
<g fill="none" stroke="#d0f0cc" stroke-width="0.9" opacity="0.6"><circle cx="294" cy="215" r="6"/><circle cx="294" cy="233" r="7"/><circle cx="282" cy="224" r="4"/><circle cx="307" cy="224" r="4"/></g>
<rect x="177.2" y="321.8" width="219.2" height="7.2" fill="#dcf6d6"/>
<g clip-path="url(#lotclip)"><g fill="#a6d2a4" filter="url(#embL)"><path d="M177,331 C183,336 194,340 193,346 C192,352 183,354 177,352 C171,354 162,352 161,346 C160,340 171,336 177,331 Z"/><path d="M211,331 C217,336 228,340 227,346 C226,352 217,354 211,352 C205,354 196,352 195,346 C194,340 205,336 211,331 Z"/><path d="M247,331 C253,336 264,340 263,346 C262,352 253,354 247,352 C241,354 232,352 231,346 C230,340 241,336 247,331 Z"/><path d="M286,331 C292,336 303,340 302,346 C301,352 292,354 286,352 C280,354 271,352 270,346 C269,340 280,336 286,331 Z"/><path d="M321,331 C327,336 338,340 337,346 C336,352 327,354 321,352 C315,354 306,352 305,346 C304,340 315,336 321,331 Z"/><path d="M357,331 C363,336 374,340 373,346 C372,352 363,354 357,352 C351,354 342,352 341,346 C340,340 351,336 357,331 Z"/><path d="M392,331 C398,336 409,340 408,346 C407,352 398,354 392,352 C386,354 377,352 376,346 C375,340 386,336 392,331 Z"/></g><g fill="none" stroke="#d0f0cc" stroke-width="1.1" opacity="0.9"><path d="M177,331 C183,336 194,340 193,346 C192,352 183,354 177,352 C171,354 162,352 161,346 C160,340 171,336 177,331 Z"/><path d="M211,331 C217,336 228,340 227,346 C226,352 217,354 211,352 C205,354 196,352 195,346 C194,340 205,336 211,331 Z"/><path d="M247,331 C253,336 264,340 263,346 C262,352 253,354 247,352 C241,354 232,352 231,346 C230,340 241,336 247,331 Z"/><path d="M286,331 C292,336 303,340 302,346 C301,352 292,354 286,352 C280,354 271,352 270,346 C269,340 280,336 286,331 Z"/><path d="M321,331 C327,336 338,340 337,346 C336,352 327,354 321,352 C315,354 306,352 305,346 C304,340 315,336 321,331 Z"/><path d="M357,331 C363,336 374,340 373,346 C372,352 363,354 357,352 C351,354 342,352 341,346 C340,340 351,336 357,331 Z"/><path d="M392,331 C398,336 409,340 408,346 C407,352 398,354 392,352 C386,354 377,352 376,346 C375,340 386,336 392,331 Z"/></g><g fill="none" stroke="#d0f0cc" stroke-width="0.9" opacity="0.8"><circle cx="173" cy="345" r="2.6"/><circle cx="181" cy="345" r="2.6"/><circle cx="207" cy="345" r="2.6"/><circle cx="215" cy="345" r="2.6"/><circle cx="243" cy="345" r="2.6"/><circle cx="251" cy="345" r="2.6"/><circle cx="282" cy="345" r="2.6"/><circle cx="290" cy="345" r="2.6"/><circle cx="317" cy="345" r="2.6"/><circle cx="325" cy="345" r="2.6"/><circle cx="353" cy="345" r="2.6"/><circle cx="361" cy="345" r="2.6"/><circle cx="388" cy="345" r="2.6"/><circle cx="396" cy="345" r="2.6"/></g><g fill="#a6d2a4" filter="url(#ornL)"><path d="M160,329 L412,329 L412,334 L160,334 Z"/></g></g>
<path d="M162,350 C200,356 370,356 411,350" fill="none" stroke="#d0f0cc" stroke-width="1" opacity="0.6"/>
</g>
</g>
<defs><linearGradient id="pdf" x1="0" y1="0" x2="1" y2="1"><stop offset="0" stop-color="#086c46"/><stop offset="0.5" stop-color="#046440"/><stop offset="1" stop-color="#035a38"/></linearGradient><linearGradient id="pdr" x1="0" y1="0" x2="0" y2="1"><stop offset="0" stop-color="#148050"/><stop offset="1" stop-color="#0a5a34"/></linearGradient><pattern id="pdt" width="5" height="5" patternUnits="userSpaceOnUse"><rect width="5" height="5" fill="#0e6a40"/><circle cx="1.5" cy="1.5" r="1.1" fill="#3aa878"/><circle cx="3.8" cy="3.8" r="0.8" fill="#209060"/></pattern><linearGradient id="plf" x1="0" y1="0" x2="1" y2="1"><stop offset="0" stop-color="#9ccc98"/><stop offset="0.5" stop-color="#8eba8a"/><stop offset="1" stop-color="#8ab686"/></linearGradient><linearGradient id="plr" x1="0" y1="0" x2="0" y2="1"><stop offset="0" stop-color="#a8d8a6"/><stop offset="1" stop-color="#86b888"/></linearGradient><pattern id="plt" width="5" height="5" patternUnits="userSpaceOnUse"><rect width="5" height="5" fill="#92c494"/><circle cx="1.5" cy="1.5" r="1.1" fill="#d4f2d0"/><circle cx="3.8" cy="3.8" r="0.8" fill="#6a9a70"/></pattern><linearGradient id="fdf" x1="0" y1="0" x2="1" y2="0"><stop offset="0" stop-color="#38a67c"/><stop offset="0.5" stop-color="#42b488"/><stop offset="1" stop-color="#3aa67e"/></linearGradient><linearGradient id="fdc" x1="0" y1="0" x2="1" y2="0"><stop offset="0" stop-color="#0e6a48"/><stop offset="0.35" stop-color="#5ad0a0"/><stop offset="0.6" stop-color="#2a9a70"/><stop offset="1" stop-color="#0c5e40"/></linearGradient><pattern id="fdt" width="4" height="4" patternUnits="userSpaceOnUse"><rect width="4" height="4" fill="#1a7a56"/><circle cx="1.2" cy="1.2" r="0.9" fill="#70d8a8"/></pattern><linearGradient id="flf" x1="0" y1="0" x2="1" y2="0"><stop offset="0" stop-color="#d4f2d0"/><stop offset="0.5" stop-color="#e2f8de"/><stop offset="1" stop-color="#cfeecb"/></linearGradient><linearGradient id="flc" x1="0" y1="0" x2="1" y2="0"><stop offset="0" stop-color="#a6d6a6"/><stop offset="0.35" stop-color="#f0fcec"/><stop offset="0.6" stop-color="#c8eac4"/><stop offset="1" stop-color="#94c496"/></linearGradient><pattern id="flt" width="4" height="4" patternUnits="userSpaceOnUse"><rect width="4" height="4" fill="#b4dcb0"/><circle cx="1.2" cy="1.2" r="0.9" fill="#e8fce4"/></pattern><linearGradient id="rgf" x1="0" y1="0" x2="1" y2="0"><stop offset="0" stop-color="#a4d4a2"/><stop offset="1" stop-color="#9ccc9a"/></linearGradient><linearGradient id="rgc" x1="0" y1="0" x2="1" y2="0"><stop offset="0" stop-color="#86b888"/><stop offset="0.4" stop-color="#d0f0cc"/><stop offset="1" stop-color="#8abc8c"/></linearGradient></defs>
<g clip-path="url(#c2)"><g>
<path d="M892.7,183.4 L917,178 L917,159 L964,166 L988.8,146.2 L1010,147.7 L1028,141.7 C1040,139 1050,137 1058.5,135.6 C1068,135 1078,135 1088.8,135.6 C1094,137.5 1099,140 1104,143 C1109,146 1114,149 1119,152.3 C1122,158 1125,164 1126.7,170.5 C1128,176.5 1129,182.5 1129.7,188.6 C1129,191.5 1128,194.5 1126.7,197.7 C1122,199.5 1116,201.5 1111.5,203.8 L1111.5,219 C1119,220 1126,221 1134,222 C1136,219 1139,216 1141.8,212.9 C1147,212.5 1152,212.5 1157,212.9 C1157,223 1156,233 1155.5,243 C1143,246 1131,249 1119,252.3 L1111,252 L1107,294.5 L901.4,230.2 Z" fill="#0a6038" filter="url(#embD)"/>
<path d="M917,159 L964,166 L964,178 L917,178 Z" fill="#0e7446"/>
<path d="M917,159 L964,166" stroke="#3aa874" stroke-width="1.2"/>
<path d="M1060,165 C1085,160 1110,165 1125,180 C1130,192 1128,203 1120,210 C1100,212 1080,208 1062,200 Z" fill="#0e6c40" filter="url(#embSD)"/>
<path d="M1075,175 C1090,176 1105,183 1115,195" stroke="#3aa878" stroke-width="5" fill="none" filter="url(#blur2)"/>
<path d="M988.8,146.2 L1010,147.7 L1010,172 L988.8,170 Z" fill="#0c663e"/>
<path d="M989,147 L1010,148.5" stroke="#40b080" stroke-width="2.5" filter="url(#blur1)"/>
<path d="M1010,148 C1020,140 1035,139 1050,142 C1055,150 1052,160 1045,166 C1032,168 1018,166 1010,162 Z" fill="#0a6a40" filter="url(#ornD)"/>
<path d="M962,176 C980,166 1010,162 1040,166 C1050,170 1055,178 1052,188 C1030,194 1000,192 975,186 C968,183 963,180 962,176 Z" fill="#107044" filter="url(#embSD)"/>
<path d="M970,174 C990,167 1015,166 1038,169" stroke="#4cc08c" stroke-width="3" fill="none" filter="url(#blur1)"/>
<path d="M975,187 C1000,193 1030,194 1050,189" stroke="#042a18" stroke-width="2.5" fill="none" filter="url(#blur1)"/>
<path d="M1045,166 L1066,168 L1064,192 L1043,189 Z" fill="#0c6c42"/>
<path d="M1049,168 L1048,189 M1061,170 L1060,191 M1049,175 L1061,177 M1049,182 L1061,184" stroke="#3aa070" stroke-width="1"/>
<path d="M1028,141.7 C1040,139 1050,137 1058.5,135.6 C1068,135 1078,135 1088.8,135.6 C1094,137.5 1099,140 1104,143 C1109,146 1114,149 1119,152.3 C1112,162 1098,168 1080,167 C1062,165 1045,158 1035,150 Z" fill="#0a6a40" filter="url(#ornD)"/>
<path d="M1040,152 C1055,162 1075,168 1095,167 C1105,165 1114,160 1119,152" stroke="#3cb07c" stroke-width="1.5" fill="none" filter="url(#blur1)"/>
<path d="M1119,152.3 C1122,158 1125,164 1126.7,170.5 C1128,176.5 1129,182.5 1129.7,188.6 C1129,191.5 1128,194.5 1126.7,197.7 L1118,203 C1122,188 1120,172 1112,160 Z" fill="#0a6a40" filter="url(#ornD)"/>
<path d="M892.7,183.4 C900,182 905,181.5 911,181.5 C916,180 920,178 924.8,177.6 C930,176 934,175.6 938.4,175.6 C946,178 952,180 958,181.5 C965,184 971,186 977,187.3 C985,189 991,190 997,191 C1004,194 1010,197 1016,199 C1023,201 1030,202 1036,203 C1043,206 1049,209 1055,210.7 C1062,214 1068,217 1075,220.4 C1082,225 1088,230 1094,234 C1099,237 1103,240 1107,242 L1107,294.5 L901.4,230.2 Z" fill="url(#pdf)"/>
<ellipse cx="903" cy="184" rx="11" ry="6.050000000000001" fill="#0d6e42" filter="url(#embSD)"/>
<ellipse cx="930" cy="179" rx="12" ry="6.6000000000000005" fill="#0d6e42" filter="url(#embSD)"/>
<ellipse cx="958" cy="184" rx="13" ry="7.15" fill="#0d6e42" filter="url(#embSD)"/>
<ellipse cx="990" cy="192" rx="14" ry="7.700000000000001" fill="#0d6e42" filter="url(#embSD)"/>
<ellipse cx="1028" cy="203" rx="15" ry="8.25" fill="#0d6e42" filter="url(#embSD)"/>
<ellipse cx="1062" cy="215" rx="13" ry="7.15" fill="#0d6e42" filter="url(#embSD)"/>
<ellipse cx="1090" cy="232" rx="11" ry="6.050000000000001" fill="#0d6e42" filter="url(#embSD)"/>
<g fill="none" stroke="#4cc08c" stroke-width="1.3" filter="url(#blur1)" opacity="0.9"><path d="M895.3,182.9 C899.7,178.5 906.3,178.5 910.7,184"/><path d="M921.6,177.8 C926.4,173.0 933.6,173.0 938.4,179"/><path d="M948.9,182.7 C954.1,177.5 961.9,177.5 967.1,184"/><path d="M980.2,190.6 C985.8,185.0 994.2,185.0 999.8,192"/><path d="M1017.5,201.5 C1023.5,195.5 1032.5,195.5 1038.5,203"/><path d="M1052.9,213.7 C1058.1,208.5 1065.9,208.5 1071.1,215"/><path d="M1082.3,230.9 C1086.7,226.5 1093.3,226.5 1097.7,232"/></g>
<g fill="#053a22" opacity="0.6" filter="url(#blur1)"><ellipse cx="905" cy="190.05" rx="8.8" ry="1.5"/><ellipse cx="932" cy="185.6" rx="9.600000000000001" ry="1.5"/><ellipse cx="960" cy="191.15" rx="10.4" ry="1.5"/><ellipse cx="992" cy="199.7" rx="11.200000000000001" ry="1.5"/><ellipse cx="1030" cy="211.25" rx="12.0" ry="1.5"/><ellipse cx="1064" cy="222.15" rx="10.4" ry="1.5"/><ellipse cx="1092" cy="238.05" rx="8.8" ry="1.5"/></g>
<g stroke="#07502e" stroke-width="1" opacity="0.5"><path d="M930,184 L931,240"/><path d="M960,190 L960,250"/><path d="M1002,198 L1002,262"/><path d="M1060,214 L1060,280"/></g>
<path d="M1104,212 L1111,210 L1111,252 L1107,294.5 L1104,293 Z" fill="#021a10"/>
<path d="M1111.5,219 C1119,220 1126,221 1134,222 C1136,219 1139,216 1141.8,212.9 C1147,212.5 1152,212.5 1157,212.9 C1157,223 1156,233 1155.5,243 C1143,246 1131,249 1119,252.3 L1111,252 Z" fill="#0d7044" filter="url(#embSD)"/>
<path d="M1114,224 C1125,226 1134,226 1140,218" stroke="#3cb07c" stroke-width="1.6" fill="none" filter="url(#blur1)"/>
<ellipse cx="1150" cy="218" rx="8" ry="6" fill="#0a5e38" filter="url(#ornD)"/>
</g><g>
<path d="M1168.3,264 L1197,259 L1197,234.3 L1251.7,243 L1251.7,212.9 C1262,211 1273,209 1283.8,207 L1293,202 C1309,201.5 1325,201.5 1341,202 C1352,203.5 1363,205.5 1374,207 C1382,207 1390,207 1398,207 C1407,211 1415,215 1424,218.8 C1427,222 1429,225 1431,228 C1436,239 1441,250 1445.7,261.7 C1447,269.5 1448,277.5 1448,285.5 L1445.7,297.4 L1467,309 C1470,305 1473,301 1476.7,297.4 C1482,301 1488,305 1493,309 C1492,319 1490,329 1488.6,338 L1479,345 L1474,352 L1468,408.5 L1170.5,316.5 Z" fill="#94c896" filter="url(#embL)"/>
<path d="M1251.7,212.9 C1260,211 1270,210 1279.6,211 L1279.6,250 L1251.7,243 Z" fill="#98ca98"/>
<path d="M1252,214 C1262,210 1272,210 1280,213" stroke="#d8f4d2" stroke-width="3" fill="none" filter="url(#blur1)"/>
<path d="M1281,211 C1290,204 1305,201 1320,202 C1328,208 1330,220 1326,232 C1312,238 1295,238 1282,236 Z" fill="#a0d09e" filter="url(#ornL)"/>
<path d="M1290,212 C1300,206 1312,206 1320,212" stroke="#e0f8da" stroke-width="3" fill="none" filter="url(#blur1)"/>
<path d="M1365,246 C1390,240 1425,245 1445,265 C1449,280 1448,292 1446,299 C1420,300 1390,295 1368,285 Z" fill="#a8d8a6" filter="url(#embSL)"/>
<path d="M1388,258 C1400,262 1415,270 1425,282" stroke="#dcf6d6" stroke-width="7" fill="none" filter="url(#blur2)"/>
<path d="M1368,282 C1390,292 1420,298 1446,298" stroke="#5a8a60" stroke-width="2.5" fill="none" filter="url(#blur1)"/>
<path d="M1417,236 C1432,245 1442,260 1448,280 L1448,297 L1440,297 C1438,275 1430,258 1414,246 Z" fill="#9ccc9a" filter="url(#ornL)"/>
<path d="M1324.6,225 C1335,212 1345,204 1362,203 C1380,203 1398,205 1412,212 C1425,219 1431,226 1431,233.2 C1425,244 1415,252 1403.7,252.3 C1385,252 1372,249 1362.8,246.8 C1348,241 1334,233 1324.6,225 Z" fill="#a4d2a2" filter="url(#ornL)"/>
<path d="M1324.6,225 C1334,233 1348,241 1362.8,246.8 C1372,249 1385,252 1403.7,252.3 C1415,252 1425,244 1431,233.2" stroke="#e4f8de" stroke-width="2.5" fill="none" filter="url(#blur1)"/>
<path d="M1326,229 C1336,237 1350,245 1364,251 C1375,254 1390,256 1404,256" stroke="#4a7a50" stroke-width="2" fill="none" filter="url(#blur1)"/>
<path d="M1258,248 C1280,240 1310,238 1335,244 C1345,248 1350,256 1348,266 C1330,272 1300,270 1275,264 C1265,260 1258,255 1258,248 Z" fill="#a6d6a4" filter="url(#embSL)"/>
<path d="M1265,247 C1285,242 1310,241 1332,246" stroke="#e6fae0" stroke-width="4" fill="none" filter="url(#blur2)"/>
<path d="M1275,265 C1300,271 1325,272 1346,267" stroke="#4e7e54" stroke-width="2.5" fill="none" filter="url(#blur1)"/>
<path d="M1342,247 L1370,250 L1369.6,271.4 L1342,268 Z" fill="#b0dcae"/>
<path d="M1348,249 L1347,269 M1364,251 L1363,271 M1348,255 L1364,257 M1348,261 L1364,263" stroke="#5a8a60" stroke-width="1.1"/>
<path d="M1197,234.3 L1467,309 L1467,347 L1197,270 Z" fill="#96c896"/>
<path d="M1197,234.3 L1467,309" stroke="#b8e0b4" stroke-width="1"/>
<path d="M1168.3,264 C1176,264 1184,264 1191,264 C1197,262 1202,260 1207.6,259 C1218,259 1227,260 1236,261.7 C1243,263 1249,265 1255,266.4 C1266,271 1277,276 1288.6,280.7 C1297,280 1306,278 1314.8,278.3 C1322,282 1329,287 1336,290 C1342,288 1349,286 1355,285.5 C1363,291 1371,297 1379,302 C1386,303 1392,304 1398,304.5 C1406,308 1414,312 1422,316.4 C1430,323 1438,331 1445.7,337.9 C1455,342 1465,347 1474,352 L1469.5,407 L1170.7,314 Z" fill="url(#plf)"/>
<ellipse cx="1182" cy="266" rx="14" ry="7.700000000000001" fill="#a8d8a6" filter="url(#embSL)"/>
<ellipse cx="1216" cy="262" rx="15" ry="8.25" fill="#a8d8a6" filter="url(#embSL)"/>
<ellipse cx="1250" cy="268" rx="13" ry="7.15" fill="#a8d8a6" filter="url(#embSL)"/>
<ellipse cx="1300" cy="282" rx="18" ry="9.9" fill="#a8d8a6" filter="url(#embSL)"/>
<ellipse cx="1352" cy="292" rx="15" ry="8.25" fill="#a8d8a6" filter="url(#embSL)"/>
<ellipse cx="1400" cy="310" rx="16" ry="8.8" fill="#a8d8a6" filter="url(#embSL)"/>
<ellipse cx="1450" cy="340" rx="16" ry="8.8" fill="#a8d8a6" filter="url(#embSL)"/>
<g fill="#3e6a44" opacity="0.55" filter="url(#blur1)"><ellipse cx="1184" cy="274.4" rx="11.200000000000001" ry="1.8"/><ellipse cx="1218" cy="271.0" rx="12.0" ry="1.8"/><ellipse cx="1252" cy="275.8" rx="10.4" ry="1.8"/><ellipse cx="1302" cy="292.8" rx="14.4" ry="1.8"/><ellipse cx="1354" cy="301.0" rx="12.0" ry="1.8"/><ellipse cx="1402" cy="319.6" rx="12.8" ry="1.8"/><ellipse cx="1452" cy="349.6" rx="12.8" ry="1.8"/></g>
<g stroke="#6a9a70" stroke-width="1" opacity="0.8"><path d="M1195,270 L1195,322"/><path d="M1230,272 L1230,332"/><path d="M1247,276 L1246,338"/><path d="M1288,290 L1288,350"/><path d="M1336,300 L1335,364"/><path d="M1378,310 L1378,378"/><path d="M1418,322 L1418,388"/></g>
<path d="M1467,309 C1470,305 1473,301 1476.7,297.4 C1482,301 1488,305 1493,309 C1492,319 1490,329 1488.6,338 L1479,345 L1474,352 Z" fill="#9ccc9c"/>
<path d="M1467,309 L1474,352 L1468,408.5 L1465,406 Z" fill="#3c6a44" opacity="0.8"/>
<ellipse cx="1484" cy="305" rx="9" ry="8" fill="#a0d09e" filter="url(#ornL)"/>
</g></g>
<defs><clipPath id="ftop"><path d="M150.6,704.5 L150.6,658 C152,656 160,655 171.6,656 C178,655 182,654 185.3,652 C188,648 190,645 191.8,644 C195,642 197,641.6 199.8,641.6 C204,641 207,642 209.5,642.4 L214.4,644.8 C220,641 224,638 228.9,637.6 C234,636.5 238,636 241.8,636 C245,635 247,634.5 249.8,634.4 C256,632 261,631 266,630.3 C272,628 277,626.5 282,626.3 C285,625.5 287,625.2 290,625.5 C295,626 299,627.5 303,628.7 C307,630 311,631 314.4,632.7 C318,634.5 320,636 322.4,637.6 C326,640 329,642 332,643.2 C336,641.5 340,641 343.4,640.8 C347,642 350,643 353,644 C357,646 360,648.5 362.7,650.5 C366,653 370,655 374,656 L379,656 C386,655.5 394,655.5 399.8,657 L399.8,704.5 Z"/></clipPath><linearGradient id="fdw" x1="0" y1="0" x2="1" y2="0"><stop offset="0" stop-color="#4cc094"/><stop offset="0.1" stop-color="#62d0a4"/><stop offset="0.3" stop-color="#40b084"/><stop offset="0.6" stop-color="#3aa87e"/><stop offset="0.85" stop-color="#48b88a"/><stop offset="1" stop-color="#3aa87e"/></linearGradient><linearGradient id="fdc" x1="0" y1="0" x2="1" y2="0"><stop offset="0" stop-color="#0a6444"/><stop offset="0.3" stop-color="#66d8a8"/><stop offset="0.55" stop-color="#2a9c70"/><stop offset="1" stop-color="#086040"/></linearGradient><linearGradient id="flw" x1="0" y1="0" x2="1" y2="0"><stop offset="0" stop-color="#e8fae4"/><stop offset="0.2" stop-color="#f2fdee"/><stop offset="0.5" stop-color="#dcf4d6"/><stop offset="0.8" stop-color="#d4f0ce"/><stop offset="1" stop-color="#e0f6da"/></linearGradient><linearGradient id="flc" x1="0" y1="0" x2="1" y2="0"><stop offset="0" stop-color="#9ccc9c"/><stop offset="0.3" stop-color="#f4fef0"/><stop offset="0.6" stop-color="#cce8c6"/><stop offset="1" stop-color="#90c092"/></linearGradient></defs>
<g clip-path="url(#c3)"><g transform="translate(0,0)">
<rect x="165.2" y="639.2" width="219.3" height="65.3" fill="#3aaa80"/>
<path d="M150.6,704.5 L150.6,658 C152,656 160,655 171.6,656 C178,655 182,654 185.3,652 C188,648 190,645 191.8,644 C195,642 197,641.6 199.8,641.6 C204,641 207,642 209.5,642.4 L214.4,644.8 C220,641 224,638 228.9,637.6 C234,636.5 238,636 241.8,636 C245,635 247,634.5 249.8,634.4 C256,632 261,631 266,630.3 C272,628 277,626.5 282,626.3 C285,625.5 287,625.2 290,625.5 C295,626 299,627.5 303,628.7 C307,630 311,631 314.4,632.7 C318,634.5 320,636 322.4,637.6 C326,640 329,642 332,643.2 C336,641.5 340,641 343.4,640.8 C347,642 350,643 353,644 C357,646 360,648.5 362.7,650.5 C366,653 370,655 374,656 L379,656 C386,655.5 394,655.5 399.8,657 L399.8,704.5 Z" fill="url(#fdw)"/>
<g fill="#3aaa80" filter="url(#embSD)"><ellipse cx="161" cy="657" rx="11" ry="3.2"/><ellipse cx="200" cy="646" rx="12" ry="5"/><ellipse cx="241" cy="640" rx="7" ry="3.5"/><ellipse cx="265" cy="636" rx="9" ry="4"/><ellipse cx="282" cy="633" rx="10" ry="4.5"/><ellipse cx="300" cy="633" rx="8" ry="4"/><ellipse cx="322" cy="640" rx="9" ry="4"/><ellipse cx="345" cy="645" rx="9" ry="4"/><ellipse cx="389" cy="657" rx="11" ry="3.2"/></g>
<path d="M255,634 C265,628 278,625 290,625 C302,626 312,630 322,637 C312,638 300,636 290,636 C278,636 265,637 255,634 Z" fill="#0a6a46" filter="url(#ornD)"/>
<rect x="150.6" y="657" width="20.0" height="47.5" fill="url(#fdc)"/>
<rect x="193" y="648" width="14.599999999999994" height="56.5" fill="url(#fdc)"/>
<rect x="238.5" y="640" width="5.099999999999994" height="64.5" fill="url(#fdc)"/>
<rect x="259" y="634" width="12" height="70.5" fill="url(#fdc)"/>
<rect x="274" y="630" width="16" height="74.5" fill="url(#fdc)"/>
<rect x="306" y="631" width="3.5" height="73.5" fill="url(#fdc)"/>
<rect x="343.4" y="644" width="3.2000000000000455" height="60.5" fill="url(#fdc)"/>
<rect x="379.5" y="657" width="20.30000000000001" height="47.5" fill="url(#fdc)"/>
<g clip-path="url(#ftop)"><g stroke="#064a30" stroke-width="1.1" opacity="0.85"><path d="M170.6,620 L170.6,704.5"/><path d="M193,620 L193,704.5"/><path d="M207.6,620 L207.6,704.5"/><path d="M216.7,620 L216.7,704.5"/><path d="M238.5,620 L238.5,704.5"/><path d="M243.6,620 L243.6,704.5"/><path d="M253.4,620 L253.4,704.5"/><path d="M259,620 L259,704.5"/><path d="M271,620 L271,704.5"/><path d="M274,620 L274,704.5"/><path d="M290,620 L290,704.5"/><path d="M306,620 L306,704.5"/><path d="M309.5,620 L309.5,704.5"/><path d="M325,620 L325,704.5"/><path d="M343.4,620 L343.4,704.5"/><path d="M346.6,620 L346.6,704.5"/><path d="M362,620 L362,704.5"/><path d="M379.5,620 L379.5,704.5"/></g>
<path d="M171,662 C178,660 184,656 190,652 C198,650 206,649 214,650 C222,645 232,642 245,641 C260,638 275,636 290,636 C305,637 318,640 330,648 C340,648 350,650 362,655 C368,659 374,661 379,662" fill="none" stroke="#064a30" stroke-width="2" opacity="0.8" filter="url(#blur1)"/>
<g fill="#9af0c8" opacity="0.55" filter="url(#blur1)"><rect x="156.2" y="661" width="3.5999999999999996" height="41.5"/><rect x="197.088" y="652" width="2.627999999999999" height="50.5"/><rect x="239.928" y="644" width="1.2" height="58.5"/><rect x="262.36" y="638" width="2.16" height="64.5"/><rect x="278.48" y="634" width="2.88" height="68.5"/><rect x="306.98" y="635" width="1.2" height="67.5"/><rect x="344.296" y="648" width="1.2" height="54.5"/><rect x="385.184" y="661" width="3.6540000000000017" height="41.5"/></g></g>
</g><g transform="translate(312,0)">
<rect x="165.2" y="639.2" width="219.3" height="65.3" fill="#dcf6d6"/>
<path d="M150.6,704.5 L150.6,658 C152,656 160,655 171.6,656 C178,655 182,654 185.3,652 C188,648 190,645 191.8,644 C195,642 197,641.6 199.8,641.6 C204,641 207,642 209.5,642.4 L214.4,644.8 C220,641 224,638 228.9,637.6 C234,636.5 238,636 241.8,636 C245,635 247,634.5 249.8,634.4 C256,632 261,631 266,630.3 C272,628 277,626.5 282,626.3 C285,625.5 287,625.2 290,625.5 C295,626 299,627.5 303,628.7 C307,630 311,631 314.4,632.7 C318,634.5 320,636 322.4,637.6 C326,640 329,642 332,643.2 C336,641.5 340,641 343.4,640.8 C347,642 350,643 353,644 C357,646 360,648.5 362.7,650.5 C366,653 370,655 374,656 L379,656 C386,655.5 394,655.5 399.8,657 L399.8,704.5 Z" fill="url(#flw)"/>
<g fill="#dcf6d6" filter="url(#embSL)"><ellipse cx="161" cy="657" rx="11" ry="3.2"/><ellipse cx="200" cy="646" rx="12" ry="5"/><ellipse cx="241" cy="640" rx="7" ry="3.5"/><ellipse cx="265" cy="636" rx="9" ry="4"/><ellipse cx="282" cy="633" rx="10" ry="4.5"/><ellipse cx="300" cy="633" rx="8" ry="4"/><ellipse cx="322" cy="640" rx="9" ry="4"/><ellipse cx="345" cy="645" rx="9" ry="4"/><ellipse cx="389" cy="657" rx="11" ry="3.2"/></g>
<path d="M255,634 C265,628 278,625 290,625 C302,626 312,630 322,637 C312,638 300,636 290,636 C278,636 265,637 255,634 Z" fill="#c4e8c0" filter="url(#ornL)"/>
<rect x="150.6" y="657" width="20.0" height="47.5" fill="url(#flc)"/>
<rect x="193" y="648" width="14.599999999999994" height="56.5" fill="url(#flc)"/>
<rect x="238.5" y="640" width="5.099999999999994" height="64.5" fill="url(#flc)"/>
<rect x="259" y="634" width="12" height="70.5" fill="url(#flc)"/>
<rect x="274" y="630" width="16" height="74.5" fill="url(#flc)"/>
<rect x="306" y="631" width="3.5" height="73.5" fill="url(#flc)"/>
<rect x="343.4" y="644" width="3.2000000000000455" height="60.5" fill="url(#flc)"/>
<rect x="379.5" y="657" width="20.30000000000001" height="47.5" fill="url(#flc)"/>
<g clip-path="url(#ftop)"><g stroke="#6a9a70" stroke-width="1.1" opacity="0.85"><path d="M170.6,620 L170.6,704.5"/><path d="M193,620 L193,704.5"/><path d="M207.6,620 L207.6,704.5"/><path d="M216.7,620 L216.7,704.5"/><path d="M238.5,620 L238.5,704.5"/><path d="M243.6,620 L243.6,704.5"/><path d="M253.4,620 L253.4,704.5"/><path d="M259,620 L259,704.5"/><path d="M271,620 L271,704.5"/><path d="M274,620 L274,704.5"/><path d="M290,620 L290,704.5"/><path d="M306,620 L306,704.5"/><path d="M309.5,620 L309.5,704.5"/><path d="M325,620 L325,704.5"/><path d="M343.4,620 L343.4,704.5"/><path d="M346.6,620 L346.6,704.5"/><path d="M362,620 L362,704.5"/><path d="M379.5,620 L379.5,704.5"/></g>
<path d="M171,662 C178,660 184,656 190,652 C198,650 206,649 214,650 C222,645 232,642 245,641 C260,638 275,636 290,636 C305,637 318,640 330,648 C340,648 350,650 362,655 C368,659 374,661 379,662" fill="none" stroke="#6a9a70" stroke-width="2" opacity="0.8" filter="url(#blur1)"/>
<g fill="#ffffff" opacity="0.55" filter="url(#blur1)"><rect x="156.2" y="661" width="3.5999999999999996" height="41.5"/><rect x="197.088" y="652" width="2.627999999999999" height="50.5"/><rect x="239.928" y="644" width="1.2" height="58.5"/><rect x="262.36" y="638" width="2.16" height="64.5"/><rect x="278.48" y="634" width="2.88" height="68.5"/><rect x="306.98" y="635" width="1.2" height="67.5"/><rect x="344.296" y="648" width="1.2" height="54.5"/><rect x="385.184" y="661" width="3.6540000000000017" height="41.5"/></g></g>
</g></g>
<defs><linearGradient id="rc1" x1="0" y1="0" x2="1" y2="0"><stop offset="0" stop-color="#8cc08c"/><stop offset="0.3" stop-color="#d8f4d2"/><stop offset="0.55" stop-color="#b4dcb0"/><stop offset="1" stop-color="#84b686"/></linearGradient><linearGradient id="rc2" x1="0" y1="0" x2="1" y2="0"><stop offset="0" stop-color="#7aac7c"/><stop offset="0.5" stop-color="#aad6a8"/><stop offset="1" stop-color="#92c492"/></linearGradient><linearGradient id="rc3" x1="0" y1="0" x2="1" y2="0"><stop offset="0" stop-color="#a0d09e"/><stop offset="0.7" stop-color="#a8d6a6"/><stop offset="1" stop-color="#80b282"/></linearGradient></defs>
<g clip-path="url(#c4)"><g>
<path d="M1088.8,746.7 L1088.4,628.6 C1092,624 1096,621.5 1100,620 C1105,617.5 1109,616.8 1113.6,616.8 C1118,617 1123,617.5 1127,618.5 C1132,620.5 1136,622.5 1138.7,625.2 L1140.4,624.4 L1154.7,624.4 L1155.5,632 C1159,634.5 1162,637 1164,640.3 L1167,637 L1192.4,637.8 C1194,639 1196,640.5 1197.4,642 C1208,640 1220,638.5 1231,637 C1240,635.5 1250,634.5 1250,633 L1249.5,613.5 C1251,612.8 1252,612.6 1253.5,612.5 C1263,611 1272,610 1281,609 C1288,607.8 1295,606.8 1302,605.6 C1308,603.5 1313,601.5 1319,600.4 C1325,599 1331,598 1336.6,597.8 C1343,599.5 1349,602.5 1354,605.6 C1359,608.5 1364,612 1367.7,616 C1369.5,620.5 1370.5,625 1371,629.8 L1374.7,635 C1379,633 1384,632 1388.5,631.6 C1392,632.2 1396,633.5 1399,635 C1400.5,639 1401.5,643 1402.4,647 C1404.5,654 1406.5,661 1409,668 L1416,668 C1418,673.5 1420,679 1421.4,685 C1425,684.3 1428,683.8 1431.8,683.5 C1434.5,685 1437,687.5 1438.7,690.4 L1438.7,746.7 Z" fill="#98cc98" filter="url(#embL)"/>
<path d="M1089,630 C1095,622 1105,617 1114,617 C1125,618 1135,622 1140,626 L1140,700 C1125,704 1110,702 1103,698 L1103.5,662 L1089.2,662 Z" fill="#a8d8a6"/>
<path d="M1104,676 C1115,672 1130,673 1140,678 L1140,688 C1128,686 1115,686 1104,690 Z" fill="#4c7a52" filter="url(#blur1)"/>
<path d="M1100,620 C1112,616 1128,618 1138,626 L1138,650 C1125,640 1110,636 1095,640 Z" fill="#aad6a6" filter="url(#ornL2)"/>
<path d="M1105,685 C1115,690 1130,694 1140,696 L1140,703 C1128,702 1112,698 1105,693 Z" fill="#b4dcb0" filter="url(#ornL)"/>
<g fill="#c4e8c0" stroke="#5a8a60" stroke-width="0.7"><circle cx="1106.0" cy="695.6" r="2.3"/><circle cx="1110.6" cy="693.1" r="2.3"/><circle cx="1115.2" cy="691.4" r="2.3"/><circle cx="1119.8" cy="690.4" r="2.3"/><circle cx="1124.4" cy="690.0" r="2.3"/><circle cx="1129.0" cy="690.4" r="2.3"/><circle cx="1133.6" cy="691.4" r="2.3"/><circle cx="1138.2" cy="693.1" r="2.3"/></g>
<path d="M1100,640 C1110,632 1128,632 1140,640" stroke="#e0f6da" stroke-width="3" fill="none" filter="url(#blur1)"/>
<path d="M1100,652 C1112,648 1128,650 1140,656" stroke="#5a8a60" stroke-width="1.6" fill="none" filter="url(#blur1)"/>
<path d="M1090,660 L1103.5,660 L1103.5,746.7 L1089.2,746.7 Z" fill="url(#rc1)"/>
<path d="M1104,700 L1140,700 L1140,746.7 L1104,746.7 Z" fill="url(#rc2)"/>
<rect x="1140.4" y="624.4" width="14.3" height="122.3" fill="#e2f6dc"/>
<rect x="1153.7" y="632" width="1.5" height="114.7" fill="#6a9a70" opacity="0.6"/>
<path d="M1155,640 C1162,638 1168,638 1175,640 L1177,746.7 L1155,746.7 Z" fill="url(#rc2)"/>
<path d="M1167,637 L1194,637.8 L1195,679 C1186,678 1176,678 1168,680 Z" fill="#9ccc9a" filter="url(#ornL)"/>
<path d="M1180,679 C1190,676 1200,680 1204,690 L1205,712 L1188,712 C1186,700 1184,690 1180,679 Z" fill="#a0d09e" filter="url(#ornL)"/>
<path d="M1195,642 C1215,639 1240,636 1262,634 C1275,634 1285,636 1290,640 L1292,668 C1275,672 1250,672 1225,672 L1196,672 Z" fill="#b0dcac"/>
<path d="M1200,648 C1225,645 1250,643 1280,643" stroke="#e2f8dc" stroke-width="5" fill="none" filter="url(#blur2)"/>
<path d="M1197,671 C1225,674 1260,674 1290,669" stroke="#6a9a70" stroke-width="2" fill="none" filter="url(#blur1)"/>
<path d="M1196,672 L1260,672 L1262,690 L1221,690 L1205,695 L1196,695 Z" fill="#c0e6bc"/>
<rect x="1205" y="690" width="16" height="56.7" fill="url(#rc2)"/>
<rect x="1221" y="689" width="32" height="57.7" fill="url(#rc1)"/>
<path d="M1221,689 C1230,683 1245,683 1253,689 L1253,694 L1221,694 Z" fill="#c8eac2" filter="url(#ornL)"/>
<rect x="1253" y="687" width="45.5" height="59.7" fill="url(#rc1)"/>
<path d="M1310.6,624.6 C1340,630 1370,648 1385,668 C1390,680 1392,690 1392,697 L1298.5,697 L1298.5,640 Z" fill="#a4d4a2"/>
<path d="M1312,626 C1325,640 1335,660 1342,690 L1300,690 L1300,640 Z" fill="#b4deb0" opacity="0.7" filter="url(#blur2)"/>
<path d="M1310.6,624.6 C1345,628 1378,648 1392,680 C1396,700 1396,720 1395,746.7 L1386,746.7 C1386,720 1386,700 1383,684 C1372,658 1345,640 1312,634 Z" fill="#c4e8c0"/>
<path d="M1386,746.7 C1386,720 1386,700 1383,684 C1372,658 1345,640 1312,634" stroke="#6a9a70" stroke-width="1.3" fill="none"/>
<path d="M1250,683.5 L1371,683.5 C1374,688 1374,694 1371,697.4 L1250,697.4 Z" fill="#b8e0b4"/>
<path d="M1250,697.4 L1371,697.4" stroke="#6a9a70" stroke-width="1.2"/>
<rect x="1298.5" y="697.4" width="87" height="49.3" fill="url(#rc3)"/>
<path d="M1284.6,624.6 L1310.6,624.6 L1310.6,685 L1284.6,685 Z" fill="#98c898" filter="url(#ornL)"/>
<path d="M1284.6,624.6 L1284.6,685 M1310.6,624.6 L1310.6,685 M1291,626 L1291,685" stroke="#4c7a52" stroke-width="1.1"/>
<path d="M1262,680 C1270,674 1285,674 1300,680 L1298,690 C1285,686 1270,686 1262,690 Z" fill="#a8d4a4" filter="url(#ornL)"/>
<path d="M1253.5,612.5 C1263,611 1272,610 1281,609 C1288,607.8 1295,606.8 1302,605.6 C1308,603.5 1313,601.5 1319,600.4 C1325,599 1331,598 1336.6,597.8 C1343,599.5 1349,602.5 1354,605.6 C1359,608.5 1364,612 1367.7,616 C1369.5,620.5 1370.5,625 1371,629.8 L1371,636 C1350,628 1320,622 1290,622 C1275,622 1262,623 1253,625 Z" fill="#a6d4a4" filter="url(#ornL2)"/>
<path d="M1374.7,635 C1379,633 1384,632 1388.5,631.6 C1392,632.2 1396,633.5 1399,635 C1400.5,639 1401.5,643 1402.4,647 C1404.5,654 1406.5,661 1409,668 L1416,668 C1418,673.5 1420,679 1421.4,685 L1410,700 L1404,746.7 L1398,746.7 C1398,720 1396,690 1388,664 C1384,652 1380,642 1374.7,640 Z" fill="#9ccc9a" filter="url(#ornL)"/>
<path d="M1421.4,685 C1425,684.3 1428,683.8 1431.8,683.5 C1434.5,685 1437,687.5 1438.7,690.4 L1438.7,746.7 L1422,746.7 L1421,690 Z" fill="url(#rc1)"/>
<g stroke="#3c6a44" stroke-width="1" opacity="0.75"><path d="M1404,700 L1404,746"/><path d="M1411,700 L1411,746"/><path d="M1421,690 L1421,746"/><path d="M1253,690 L1253,746"/><path d="M1221,690 L1221,746"/><path d="M1205,695 L1205,746"/><path d="M1177,700 L1177,746"/><path d="M1103.5,662 L1103.5,746"/><path d="M1298.5,697 L1298.5,746"/></g>
</g></g>
<g font-family="Liberation Sans" font-size="11" font-weight="bold"><path d="M80.5,420 L80.5,451.5" stroke="#5a9e96" stroke-width="1"/><path d="M80.5,451.5 L109,451.5" stroke="#7a1a30" stroke-width="1"/><text x="82" y="425" fill="#48aaa0">y</text><text x="112.5" y="453" fill="#c03448">x</text></g><g font-family="Liberation Sans" font-size="11" font-weight="bold"><path d="M866.5,425 L866.5,450.5" stroke="#d8c8a0" stroke-width="1"/><path d="M866.5,450.5 L880,439" stroke="#5a9e96" stroke-width="1"/><path d="M866.5,450.5 L892,459" stroke="#7a1a30" stroke-width="1"/><text x="868.5" y="426" fill="#e8d890">z</text><text x="880" y="441" fill="#3aa8a0">y</text><text x="894.5" y="461" fill="#c03448">x</text></g><g font-family="Liberation Sans" font-size="11" font-weight="bold"><path d="M80.5,855 L80.5,885.5" stroke="#d8d0a8" stroke-width="1"/><path d="M80.5,885.5 L110,885.5" stroke="#7a1a38" stroke-width="1"/><text x="82" y="857" fill="#e8e0a0">z</text><text x="112.5" y="888" fill="#c03448">x</text></g><g font-family="Liberation Sans" font-size="11" font-weight="bold"><path d="M866.5,855 L866.5,885.5" stroke="#d8d0a8" stroke-width="1"/><path d="M866.5,885.5 L896,885.5" stroke="#5a9e96" stroke-width="1"/><text x="868.5" y="857" fill="#e8e0a0">z</text><text x="897.5" y="887" fill="#3aa8a0">y</text></g><g fill="none" stroke="#d8b038" stroke-width="1.4"><rect x="767.5" y="89.5" width="37" height="14.5" rx="7.2"/><rect x="771" y="92.5" width="30" height="8.5" rx="4.2" stroke-width="1.1"/></g><circle cx="786" cy="96.5" r="5.6" fill="#10206a" stroke="#8a9ad8" stroke-width="1.1"/><path d="M782.5,94 L789.5,99 M789.5,94 L782.5,99 M786,91.5 L786,101.5" stroke="#4a70d0" stroke-width="0.8"/><path d="M782.5,104 L786,108 L789.5,104" fill="none" stroke="#8a8ab8" stroke-width="1"/><g fill="none" stroke="#d8b038" stroke-width="1.2"><ellipse cx="1569" cy="99" rx="15" ry="18" transform="rotate(-28 1569 99)"/><ellipse cx="1569" cy="100" rx="11" ry="14.5" transform="rotate(-28 1569 100)"/><path d="M1560,82 C1568,76 1580,80 1586,90 C1590,98 1589,106 1586,110" /><path d="M1563,84 C1571,79 1580,83 1584,92" /></g><path d="M1566,70 L1575,69 L1579,74 L1573,80 L1564,77Z" fill="#1a2a90" stroke="#6a8ae0" stroke-width="1"/><g fill="none" stroke="#d8b038" stroke-width="1.3"><circle cx="786" cy="531" r="18.3"/><circle cx="786" cy="531" r="15.4"/></g><path d="M781.5,501.5 L790.5,501.5 L792.5,504.5 L786,511 L779.5,504.5 Z M779.5,504.5 L792.5,504.5 M784,501.5 L786,511 L788,501.5" fill="#0a1448" stroke="#7888cc" stroke-width="1"/><path d="M786,511 L786,514" stroke="#d8b038" stroke-width="2"/><path d="M1562,504 C1562,501 1579,501 1579,504 L1571,509Z" fill="none" stroke="#5878d8" stroke-width="1.2"/><g fill="none" stroke="#d8b038" stroke-width="1.3"><path d="M1571,509 L1578,514 L1574,547 L1570,550 L1567,547 L1563,514Z"/><path d="M1565,518 L1577,518 M1566,530 L1575,530"/></g>
</svg>
<div class="lbl" style="left:44px;top:57px;width:47px"><span>Top</span><i style="left:36px"></i><b style="left:38px"></b></div>
<div class="lbl" style="left:830px;top:57px;width:87px"><span>Perspective</span><i style="left:77px"></i><b style="left:79px"></b></div>
<div class="lbl" style="left:44px;top:491px;width:55px"><span>Front</span><i style="left:44px"></i><b style="left:46px"></b></div>
<div class="lbl" style="left:830px;top:491px;width:55px;background:linear-gradient(#8fc29c,#84b992);color:#102018"><span>Right</span><i style="left:44px;background:#102018"></i><b style="left:46px;border-top-color:#102018"></b></div>

</body></html>
